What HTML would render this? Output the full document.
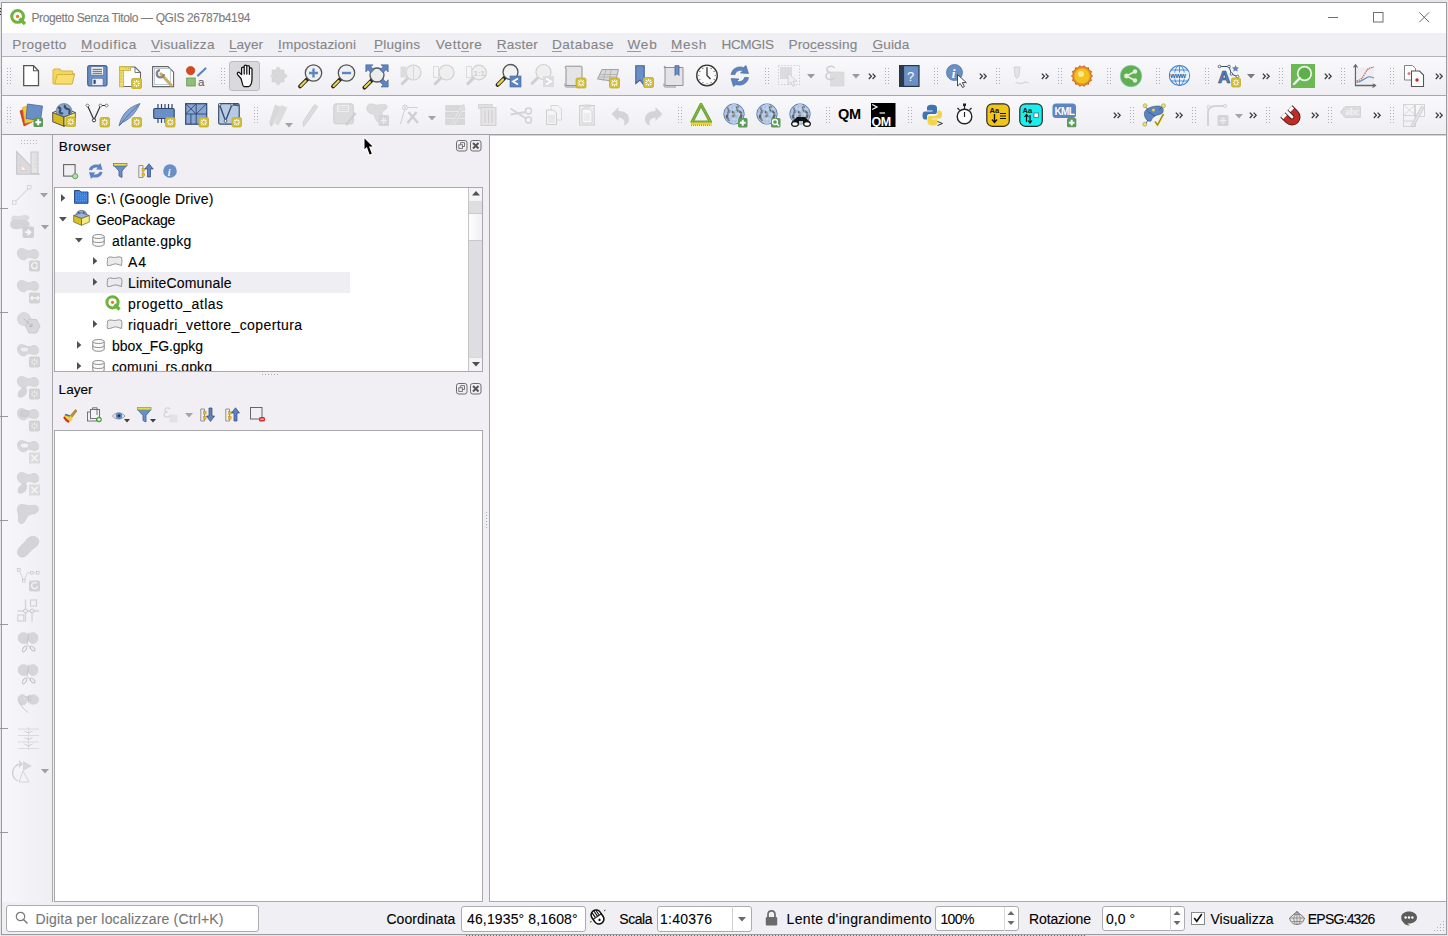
<!DOCTYPE html><html><head><meta charset="utf-8"><style>
html,body{margin:0;padding:0;}
body{width:1448px;height:936px;overflow:hidden;position:relative;background:#e9e9ec;font-family:"Liberation Sans",sans-serif;}
.t{position:absolute;white-space:nowrap;line-height:normal;font-family:"Liberation Sans",sans-serif;-webkit-text-stroke:0.1px currentColor;}
svg{overflow:visible}
</style></head><body>
<div style="position:absolute;left:0px;top:0px;width:1448px;height:936px;background:#e6e6e9"></div>
<svg style="position:absolute;left:0px;top:8px;" width="2" height="7" viewBox="0 0 2 7"><path d="M0 0.5H1.5M0 3.5H1.5M0 6.5H1.5" stroke="#333" stroke-width="1"/><path d="M1.3 0.5V6.5" stroke="#444" stroke-width="0.8"/></svg>
<div style="position:absolute;left:1px;top:2px;width:1446px;height:933px;background:#f0eff3;box-sizing:border-box;border:1px solid #9c9ca0"></div>
<div style="position:absolute;left:2px;top:3px;width:1444px;height:30px;background:#fff"></div>
<svg style="position:absolute;left:10px;top:9px;" width="17" height="16" viewBox="0 0 17 16"><circle cx="7.6" cy="7.4" r="5.9" fill="none" stroke="#6cb33f" stroke-width="3"/><path d="M9.5 9.5L15 15" stroke="#6cb33f" stroke-width="3.2"/><circle cx="7.6" cy="7.4" r="1.7" fill="#ee7913"/></svg>
<div class="t" style="left:31.4px;top:11.14px;font-size:12.0px;color:#7c7c7c;letter-spacing:-0.382px;">Progetto Senza Titolo — QGIS 26787b4194</div>
<svg style="position:absolute;left:1328px;top:17px;" width="11" height="1" viewBox="0 0 11 1"><rect x="0" y="0" width="10" height="1" fill="#6e6e6e"/></svg>
<svg style="position:absolute;left:1373px;top:12px;" width="11" height="11" viewBox="0 0 11 11"><rect x="0.5" y="0.5" width="9.5" height="9.5" fill="none" stroke="#6e6e6e" stroke-width="1"/></svg>
<svg style="position:absolute;left:1419px;top:12px;" width="11" height="11" viewBox="0 0 11 11"><path d="M0.3 0.3L10.2 10.2M10.2 0.3L0.3 10.2" stroke="#6e6e6e" stroke-width="1"/></svg>
<div style="position:absolute;left:2px;top:33px;width:1444px;height:23px;background:#f0eff4"></div>
<div style="position:absolute;left:2px;top:56px;width:1444px;height:1px;background:#b4b4b8"></div>
<div class="t" style="left:12.2px;top:37.39px;font-size:13.6px;color:#858585;letter-spacing:0.398px;">Progetto</div>
<div style="position:absolute;left:21.8px;top:51px;width:4.8px;height:1px;background:#9a9a9a"></div>
<div class="t" style="left:81.0px;top:37.39px;font-size:13.6px;color:#858585;letter-spacing:0.679px;">Modifica</div>
<div style="position:absolute;left:81.0px;top:51px;width:12.4px;height:1px;background:#9a9a9a"></div>
<div class="t" style="left:151.0px;top:37.39px;font-size:13.6px;color:#858585;letter-spacing:0.280px;">Visualizza</div>
<div style="position:absolute;left:151.0px;top:51px;width:9.4px;height:1px;background:#9a9a9a"></div>
<div class="t" style="left:229.0px;top:37.39px;font-size:13.6px;color:#858585;letter-spacing:-0.005px;">Layer</div>
<div style="position:absolute;left:229.0px;top:51px;width:7.6px;height:1px;background:#9a9a9a"></div>
<div class="t" style="left:278.0px;top:37.39px;font-size:13.6px;color:#858585;letter-spacing:0.150px;">Impostazioni</div>
<div style="position:absolute;left:278.0px;top:51px;width:3.9px;height:1px;background:#9a9a9a"></div>
<div class="t" style="left:374.0px;top:37.39px;font-size:13.6px;color:#858585;letter-spacing:0.232px;">Plugins</div>
<div style="position:absolute;left:374.0px;top:51px;width:9.4px;height:1px;background:#9a9a9a"></div>
<div class="t" style="left:435.8px;top:37.39px;font-size:13.6px;color:#858585;letter-spacing:0.483px;">Vettore</div>
<div style="position:absolute;left:460.8px;top:51px;width:8.1px;height:1px;background:#9a9a9a"></div>
<div class="t" style="left:496.7px;top:37.39px;font-size:13.6px;color:#858585;letter-spacing:0.188px;">Raster</div>
<div style="position:absolute;left:496.7px;top:51px;width:10.1px;height:1px;background:#9a9a9a"></div>
<div class="t" style="left:552.0px;top:37.39px;font-size:13.6px;color:#858585;letter-spacing:0.497px;">Database</div>
<div style="position:absolute;left:552.0px;top:51px;width:10.4px;height:1px;background:#9a9a9a"></div>
<div class="t" style="left:627.4px;top:37.39px;font-size:13.6px;color:#858585;letter-spacing:0.840px;">Web</div>
<div style="position:absolute;left:627.4px;top:51px;width:13.6px;height:1px;background:#9a9a9a"></div>
<div class="t" style="left:671.0px;top:37.39px;font-size:13.6px;color:#858585;letter-spacing:0.714px;">Mesh</div>
<div style="position:absolute;left:671.0px;top:51px;width:12.1px;height:1px;background:#9a9a9a"></div>
<div class="t" style="left:721.5px;top:37.39px;font-size:13.6px;color:#858585;letter-spacing:-0.380px;">HCMGIS</div>
<div class="t" style="left:788.4px;top:37.39px;font-size:13.6px;color:#858585;letter-spacing:0.191px;">Processing</div>
<div style="position:absolute;left:810.1px;top:51px;width:7.0px;height:1px;background:#9a9a9a"></div>
<div class="t" style="left:872.4px;top:37.39px;font-size:13.6px;color:#858585;letter-spacing:0.177px;">Guida</div>
<div style="position:absolute;left:872.4px;top:51px;width:10.8px;height:1px;background:#9a9a9a"></div>
<div style="position:absolute;left:2px;top:57px;width:1444px;height:38px;background:linear-gradient(#f9f8fb,#efeef2)"></div>
<div style="position:absolute;left:2px;top:95px;width:1444px;height:1px;background:#a8a8ac"></div>
<div style="position:absolute;left:2px;top:96px;width:1444px;height:38px;background:linear-gradient(#f9f8fb,#efeef2)"></div>
<div style="position:absolute;left:2px;top:134px;width:1444px;height:1px;background:#a0a0a4"></div>
<svg style="position:absolute;left:7px;top:68px;" width="4" height="17" viewBox="0 0 4 17"><rect x="0" y="0" width="1" height="1" fill="#b0b0b4"/><rect x="0" y="3" width="1" height="1" fill="#b0b0b4"/><rect x="0" y="6" width="1" height="1" fill="#b0b0b4"/><rect x="0" y="9" width="1" height="1" fill="#b0b0b4"/><rect x="0" y="12" width="1" height="1" fill="#b0b0b4"/><rect x="0" y="15" width="1" height="1" fill="#b0b0b4"/><rect x="3" y="0" width="1" height="1" fill="#b0b0b4"/><rect x="3" y="3" width="1" height="1" fill="#b0b0b4"/><rect x="3" y="6" width="1" height="1" fill="#b0b0b4"/><rect x="3" y="9" width="1" height="1" fill="#b0b0b4"/><rect x="3" y="12" width="1" height="1" fill="#b0b0b4"/><rect x="3" y="15" width="1" height="1" fill="#b0b0b4"/></svg>
<svg style="position:absolute;left:23px;top:65px;" width="17" height="22" viewBox="0 0 17 22"><path d="M0.7 0.7H10.5L15.5 5.7V20.7H0.7Z" fill="#fff" stroke="#555" stroke-width="1.3"/><path d="M10.5 0.7V5.7H15.5" fill="none" stroke="#555" stroke-width="1.1"/></svg>
<svg style="position:absolute;left:52px;top:67px;" width="23" height="19" viewBox="0 0 23 19"><path d="M1 3.2V16.8H20L22.5 6.5H20.5V4H9.5L8 2H2Z" fill="#f4d65c" stroke="#d4b43e" stroke-width="1"/><path d="M2.8 17L5.2 7.5H22.5L20.2 17Z" fill="#f7dd6b" stroke="#d4b43e" stroke-width="1"/></svg>
<svg style="position:absolute;left:87px;top:65px;" width="21" height="22" viewBox="0 0 21 22"><rect x="0.7" y="0.7" width="19.3" height="20.3" rx="2.2" fill="#6a8fc6" stroke="#46648f" stroke-width="1.2"/><rect x="4" y="1.8" width="12.5" height="8.2" fill="#f6f6f6" stroke="#46648f" stroke-width="0.5"/><path d="M5.5 4.3H15M5.5 6.3H15M5.5 8.3H15" stroke="#3a3a3a" stroke-width="0.8"/><rect x="5" y="13.3" width="11" height="7" fill="#eef2f8" stroke="#46648f" stroke-width="0.5"/><rect x="6.5" y="14.8" width="2.2" height="4" fill="#2f4670"/></svg>
<svg style="position:absolute;left:119px;top:66px;" width="23" height="23" viewBox="0 0 23 23"><path d="M3 1H16L21.5 6.5V20.5H3Z" fill="#fff" stroke="#666" stroke-width="1.1"/><path d="M16 1V6.5H21.5" fill="none" stroke="#666" stroke-width="0.9"/><rect x="0.6" y="0.8" width="4" height="20" fill="#f1dd6b" stroke="#cdb23c" stroke-width="0.9"/><rect x="0.6" y="0.8" width="11" height="3.6" fill="#f1dd6b" stroke="#cdb23c" stroke-width="0.9"/><path d="M1.5 7H3M1.5 10H3M1.5 13H3M1.5 16H3M7 1.5V3M9.5 1.5V3" stroke="#b89a30" stroke-width="0.6"/><rect x="12.5" y="12.5" width="10" height="10" rx="1.5" fill="#d0bd38" stroke="#c2ad2a" stroke-width="0.8"/><g stroke="#fff" stroke-width="1.1"><path d="M17.5 14.0V21.0 M14.0 17.5H21.0 M14.8 14.8L20.2 20.2 M20.2 14.8L14.8 20.2"/></g><circle cx="17.5" cy="17.5" r="1.5" fill="#d0bd38"/></svg>
<svg style="position:absolute;left:152px;top:66px;" width="23" height="23" viewBox="0 0 23 23"><path d="M0.6 0.6H16L21.6 6.2V20.6H0.6Z" fill="#fff" stroke="#666" stroke-width="1.1"/><rect x="2.3" y="2.5" width="16" height="16" fill="none" stroke="#9cb0d0" stroke-width="0.7"/><path d="M9 8L19 19" stroke="#c8b06a" stroke-width="3.2" stroke-linecap="round"/><path d="M8 4.2A3.6 3.6 0 1 0 12 8.2" fill="none" stroke="#888" stroke-width="2.3"/></svg>
<svg style="position:absolute;left:186px;top:66px;" width="21" height="21" viewBox="0 0 21 21"><circle cx="4.6" cy="4.6" r="4.2" fill="#d9481a" stroke="#b03410" stroke-width="0.6"/><path d="M12 9.5L19.5 2.5" stroke="#5b84c4" stroke-width="2.2" stroke-linecap="round"/><rect x="0.7" y="12" width="8.5" height="8" fill="#8fbf78" stroke="#5f9a48" stroke-width="0.8"/><text x="12" y="20" font-family="Liberation Sans" font-size="11.5" fill="#555">a</text></svg>
<svg style="position:absolute;left:221px;top:68px;" width="4" height="17" viewBox="0 0 4 17"><rect x="0" y="0" width="1" height="1" fill="#b0b0b4"/><rect x="0" y="3" width="1" height="1" fill="#b0b0b4"/><rect x="0" y="6" width="1" height="1" fill="#b0b0b4"/><rect x="0" y="9" width="1" height="1" fill="#b0b0b4"/><rect x="0" y="12" width="1" height="1" fill="#b0b0b4"/><rect x="0" y="15" width="1" height="1" fill="#b0b0b4"/><rect x="3" y="0" width="1" height="1" fill="#b0b0b4"/><rect x="3" y="3" width="1" height="1" fill="#b0b0b4"/><rect x="3" y="6" width="1" height="1" fill="#b0b0b4"/><rect x="3" y="9" width="1" height="1" fill="#b0b0b4"/><rect x="3" y="12" width="1" height="1" fill="#b0b0b4"/><rect x="3" y="15" width="1" height="1" fill="#b0b0b4"/></svg>
<div style="position:absolute;left:229px;top:61px;width:31px;height:30px;background:#dadade;border:1px solid #bdbdc0;border-radius:3px;box-sizing:border-box"></div>
<svg style="position:absolute;left:235.5px;top:63.5px;" width="18" height="24" viewBox="0 0 18 24"><path d="M5 14.5L1.6 10.6C0.6 9.4 1.9 7.6 3.4 8.6L5.6 10.5V4.2C5.6 2.6 8.2 2.6 8.2 4.2V10V2.2C8.2 0.6 10.8 0.6 10.8 2.2V10V2.8C10.8 1.2 13.4 1.2 13.4 2.8V10.3V5C13.4 3.4 16 3.4 16 5V15C16 19.5 14.2 22.5 12.5 22.5H8C6.5 22.5 6.2 18 5 14.5Z" fill="#fff" stroke="#111" stroke-width="1.25" stroke-linejoin="round"/></svg>
<svg style="position:absolute;left:267px;top:65px;" width="22" height="22" viewBox="0 0 22 22"><path d="M11 0L14.5 3.5H12.5V6.5H15.5V4.5L19 8L15.5 11.5V9.5H12.5V12.5H14.5L11 16L7.5 12.5H9.5V9.5H6.5V11.5L3 8L6.5 4.5V6.5H9.5V3.5H7.5Z" fill="#dadadc" transform="translate(0,3)"/><path d="M5 4H9C9 2 10 1 11 1S13 2 13 4H17V8C19 8 20 9 20 10S19 12 17 12V16H13C13 18 12 19 11 19S9 18 9 16H5V12C7 12 8 11 8 10S7 8 5 8Z" fill="#d8d8da" stroke="#d0d0d2" stroke-width="0.6" transform="translate(0,1)"/></svg>
<svg style="position:absolute;left:299px;top:64px;" width="24" height="24" viewBox="0 0 24 24"><path d="M8.596 14.904L1.096 22.404" stroke="#222" stroke-width="4" stroke-linecap="round"/><path d="M6.596 16.904L1.596 21.904" stroke="#e8d44d" stroke-width="2.2" stroke-linecap="round"/><circle cx="14.5" cy="9" r="8.2" fill="#f0f0f0" stroke="#555" stroke-width="1.3"/><path d="M14.5 4.5V13.5M10 9H19" stroke="#5b84c4" stroke-width="2.4"/></svg>
<svg style="position:absolute;left:332px;top:64px;" width="24" height="24" viewBox="0 0 24 24"><path d="M8.596 14.904L1.096 22.404" stroke="#222" stroke-width="4" stroke-linecap="round"/><path d="M6.596 16.904L1.596 21.904" stroke="#e8d44d" stroke-width="2.2" stroke-linecap="round"/><circle cx="14.5" cy="9" r="8.2" fill="#f0f0f0" stroke="#555" stroke-width="1.3"/><path d="M10 9H19" stroke="#5b84c4" stroke-width="2.4"/></svg>
<svg style="position:absolute;left:365px;top:64px;" width="24" height="24" viewBox="0 0 24 24"><path d="M6.96 16.04L-0.54 23.54" stroke="#222" stroke-width="4" stroke-linecap="round"/><path d="M4.96 18.04L-0.040000000000000036 23.04" stroke="#e8d44d" stroke-width="2.2" stroke-linecap="round"/><circle cx="12" cy="11" r="7" fill="#ececec" stroke="#555" stroke-width="1.3"/><path d="M0.8 0.8H8L6 2.8L9 5.8L6 8.8L3 5.8L0.8 8Z" fill="#5b84c4" stroke="#46648f" stroke-width="0.6"/><path d="M23.2 0.8H16L18 2.8L15 5.8L18 8.8L21 5.8L23.2 8Z" fill="#5b84c4" stroke="#46648f" stroke-width="0.6"/><path d="M23.2 23H16L18 21L15 18L18 15L21 18L23.2 15.8Z" fill="#5b84c4" stroke="#46648f" stroke-width="0.6"/></svg>
<svg style="position:absolute;left:398px;top:64px;" width="24" height="24" viewBox="0 0 24 24"><path d="M10.25 13.75L4.25 19.75" stroke="#cfcfd1" stroke-width="3" stroke-linecap="round"/><circle cx="15.5" cy="8.5" r="7.5" fill="#efeff0" stroke="#d0d0d2" stroke-width="1.2"/><rect x="2.5" y="2.5" width="6" height="11" fill="#dcdcde"/><path d="M15.5 2V15" stroke="#d6d6d8" stroke-width="1"/></svg>
<svg style="position:absolute;left:431px;top:64px;" width="24" height="24" viewBox="0 0 24 24"><path d="M10.25 13.75L4.25 19.75" stroke="#cfcfd1" stroke-width="3" stroke-linecap="round"/><circle cx="15.5" cy="8.5" r="7.5" fill="#efeff0" stroke="#d0d0d2" stroke-width="1.2"/><rect x="2.5" y="2.5" width="5" height="11" fill="none" stroke="#dcdcde"/></svg>
<svg style="position:absolute;left:464px;top:64px;" width="24" height="24" viewBox="0 0 24 24"><path d="M9.89 13.61L3.8900000000000006 19.61" stroke="#cfcfd1" stroke-width="3" stroke-linecap="round"/><circle cx="15" cy="8.5" r="7.3" fill="#efeff0" stroke="#d0d0d2" stroke-width="1.2"/><rect x="2.5" y="2.5" width="5" height="11" fill="none" stroke="#dcdcde"/><text x="9.5" y="12" font-family="Liberation Sans" font-weight="bold" font-size="8" fill="#cfcfd1">1:1</text></svg>
<svg style="position:absolute;left:497px;top:64px;" width="24" height="24" viewBox="0 0 24 24"><path d="M8.100000000000001 13.399999999999999L0.6000000000000014 20.9" stroke="#222" stroke-width="4" stroke-linecap="round"/><path d="M6.100000000000001 15.399999999999999L1.1000000000000014 20.4" stroke="#e8d44d" stroke-width="2.2" stroke-linecap="round"/><circle cx="13.5" cy="8" r="7.5" fill="#f2f2f2" stroke="#555" stroke-width="1.3"/><rect x="13" y="12" width="11" height="11" fill="#5b84c4" stroke="#46648f" stroke-width="0.6"/><path d="M21 14.5L16 17.5L21 20.5" fill="none" stroke="#fff" stroke-width="1.8"/></svg>
<svg style="position:absolute;left:530px;top:64px;" width="24" height="24" viewBox="0 0 24 24"><path d="M8.25 13.25L2.25 19.25" stroke="#cfcfd1" stroke-width="3" stroke-linecap="round"/><circle cx="13.5" cy="8" r="7.5" fill="#efeff0" stroke="#d0d0d2" stroke-width="1.2"/><rect x="13" y="12" width="11" height="11" fill="#dcdcde"/><path d="M16 14.5L21 17.5L16 20.5" fill="none" stroke="#fff" stroke-width="1.8"/></svg>
<svg style="position:absolute;left:564px;top:65px;" width="23" height="23" viewBox="0 0 23 23"><path d="M2 1.2C0.8 1.2 0.8 3 2 3V20.5H18V2C18 1.5 17.8 1.2 17 1.2Z" fill="#e4e4e6" stroke="#888" stroke-width="0.9"/><path d="M1 18.5V21C1 22 2 22 3 22H13" fill="none" stroke="#888" stroke-width="0.9"/><rect x="12" y="13" width="10" height="10" rx="1.5" fill="#d0bd38" stroke="#c2ad2a" stroke-width="0.8"/><g stroke="#fff" stroke-width="1.1"><path d="M17.0 14.5V21.5 M13.5 18.0H20.5 M14.3 15.3L19.7 20.7 M19.7 15.3L14.3 20.7"/></g><circle cx="17.0" cy="18.0" r="1.5" fill="#d0bd38"/></svg>
<svg style="position:absolute;left:597px;top:66px;" width="23" height="23" viewBox="0 0 23 23"><path d="M0.5 13L5 3.5H21.5L18.5 15.5Z" fill="#d8d8da" stroke="#999" stroke-width="0.9"/><path d="M3 8.5H20M2 11H19.5M9 3.5L6 15M14 3.5L12 15.5" stroke="#aaa" stroke-width="0.7"/><rect x="12.5" y="12" width="10" height="10" rx="1.5" fill="#d0bd38" stroke="#c2ad2a" stroke-width="0.8"/><g stroke="#fff" stroke-width="1.1"><path d="M17.5 13.5V20.5 M14.0 17.0H21.0 M14.8 14.3L20.2 19.7 M20.2 14.3L14.8 19.7"/></g><circle cx="17.5" cy="17.0" r="1.5" fill="#d0bd38"/></svg>
<svg style="position:absolute;left:635px;top:65px;" width="19" height="23" viewBox="0 0 19 23"><path d="M0.8 0.7H9.2V20.5L5 15L0.8 18.5Z" fill="#6a8fc6" stroke="#3e5f92" stroke-width="1.1"/><rect x="8.5" y="12.5" width="10" height="10" rx="1.5" fill="#d0bd38" stroke="#c2ad2a" stroke-width="0.8"/><g stroke="#fff" stroke-width="1.1"><path d="M13.5 14.0V21.0 M10.0 17.5H17.0 M10.8 14.8L16.2 20.2 M16.2 14.8L10.8 20.2"/></g><circle cx="13.5" cy="17.5" r="1.5" fill="#d0bd38"/></svg>
<svg style="position:absolute;left:663px;top:65px;" width="21" height="23" viewBox="0 0 21 23"><path d="M2 1.2C0.8 1.2 0.8 3 2 3V20.5H20V2.5H2Z" fill="#e4e4e6" stroke="#888" stroke-width="0.9"/><path d="M1 18.5V21C1 22 2 22 3 22H13" fill="none" stroke="#888" stroke-width="0.9"/><path d="M12 0.7H16V10.5L14 8.5L12 10.5Z" fill="#6a8fc6" stroke="#3e5f92" stroke-width="0.8"/></svg>
<svg style="position:absolute;left:696px;top:64px;" width="22" height="23" viewBox="0 0 22 23"><circle cx="11" cy="11.5" r="10.3" fill="#fafafa" stroke="#333" stroke-width="1.3"/><path d="M11 3.5V11.5L14.5 15" fill="none" stroke="#333" stroke-width="1.3"/><circle cx="19.20" cy="11.50" r="0.55" fill="#444"/><circle cx="18.10" cy="15.60" r="0.55" fill="#444"/><circle cx="15.10" cy="18.60" r="0.55" fill="#444"/><circle cx="11.00" cy="19.70" r="0.55" fill="#444"/><circle cx="6.90" cy="18.60" r="0.55" fill="#444"/><circle cx="3.90" cy="15.60" r="0.55" fill="#444"/><circle cx="2.80" cy="11.50" r="0.55" fill="#444"/><circle cx="3.90" cy="7.40" r="0.55" fill="#444"/><circle cx="6.90" cy="4.40" r="0.55" fill="#444"/><circle cx="11.00" cy="3.30" r="0.55" fill="#444"/><circle cx="15.10" cy="4.40" r="0.55" fill="#444"/><circle cx="18.10" cy="7.40" r="0.55" fill="#444"/></svg>
<svg style="position:absolute;left:729px;top:65px;" width="21" height="22" viewBox="0 0 21 22"><path d="M2 9.5C3 3.5 9 0.5 14.5 2.5L17 0.5L19.5 8.5L11.5 8L13.8 5.7C10 4.6 7 6.2 6 9.5Z" fill="#5b84c4" stroke="#46648f" stroke-width="0.6"/><path d="M19.5 12.5C18.5 18.5 12.5 21.5 7 19.5L4.5 21.5L2 13.5L10 14L7.7 16.3C11.5 17.4 14.5 15.8 15.5 12.5Z" fill="#5b84c4" stroke="#46648f" stroke-width="0.6"/></svg>
<svg style="position:absolute;left:765px;top:68px;" width="4" height="17" viewBox="0 0 4 17"><rect x="0" y="0" width="1" height="1" fill="#b0b0b4"/><rect x="0" y="3" width="1" height="1" fill="#b0b0b4"/><rect x="0" y="6" width="1" height="1" fill="#b0b0b4"/><rect x="0" y="9" width="1" height="1" fill="#b0b0b4"/><rect x="0" y="12" width="1" height="1" fill="#b0b0b4"/><rect x="0" y="15" width="1" height="1" fill="#b0b0b4"/><rect x="3" y="0" width="1" height="1" fill="#b0b0b4"/><rect x="3" y="3" width="1" height="1" fill="#b0b0b4"/><rect x="3" y="6" width="1" height="1" fill="#b0b0b4"/><rect x="3" y="9" width="1" height="1" fill="#b0b0b4"/><rect x="3" y="12" width="1" height="1" fill="#b0b0b4"/><rect x="3" y="15" width="1" height="1" fill="#b0b0b4"/></svg>
<svg style="position:absolute;left:778px;top:65px;" width="22" height="22" viewBox="0 0 22 22"><rect x="0.5" y="0.5" width="21" height="19" fill="none" stroke="#cfcfd1" stroke-dasharray="1.5 1.5"/><rect x="2" y="2" width="12" height="12" fill="#dcdcde"/><path d="M10 8V19.5L12.8 17L15 21.5L17 20.5L15 16.3H19Z" fill="#efeff1" stroke="#cfcfd1" stroke-width="0.9"/></svg>
<svg style="position:absolute;left:807px;top:74px;" width="8" height="5" viewBox="0 0 8 5"><path d="M0 0H8L4 4.5Z" fill="#9a9a9c"/></svg>
<svg style="position:absolute;left:825px;top:65px;" width="20" height="22" viewBox="0 0 20 22"><rect x="5.5" y="7" width="13.5" height="14" fill="#dcdcde" stroke="#d4d4d6" stroke-width="0.6"/><path d="M9.5 3C8.5 1.5 6.5 1 4.5 1.5S1.5 3.5 2 5S4 7.5 6 7.5C3.5 7.5 1 8.5 1 11S3 14.5 5.5 14.5S9 13.5 10 12.5" fill="none" stroke="#cfcfd1" stroke-width="1.6"/></svg>
<svg style="position:absolute;left:852px;top:74px;" width="8" height="5" viewBox="0 0 8 5"><path d="M0 0H8L4 4.5Z" fill="#9a9a9c"/></svg>
<svg style="position:absolute;left:868px;top:73px;" width="8" height="7" viewBox="0 0 8 7"><path d="M0.8 0.6L3.4 3.3L0.8 6M4.6 0.6L7.2 3.3L4.6 6" fill="none" stroke="#3a3a3a" stroke-width="1.25"/></svg>
<svg style="position:absolute;left:885px;top:68px;" width="4" height="17" viewBox="0 0 4 17"><rect x="0" y="0" width="1" height="1" fill="#b0b0b4"/><rect x="0" y="3" width="1" height="1" fill="#b0b0b4"/><rect x="0" y="6" width="1" height="1" fill="#b0b0b4"/><rect x="0" y="9" width="1" height="1" fill="#b0b0b4"/><rect x="0" y="12" width="1" height="1" fill="#b0b0b4"/><rect x="0" y="15" width="1" height="1" fill="#b0b0b4"/><rect x="3" y="0" width="1" height="1" fill="#b0b0b4"/><rect x="3" y="3" width="1" height="1" fill="#b0b0b4"/><rect x="3" y="6" width="1" height="1" fill="#b0b0b4"/><rect x="3" y="9" width="1" height="1" fill="#b0b0b4"/><rect x="3" y="12" width="1" height="1" fill="#b0b0b4"/><rect x="3" y="15" width="1" height="1" fill="#b0b0b4"/></svg>
<svg style="position:absolute;left:899px;top:65px;" width="21" height="22" viewBox="0 0 21 22"><rect x="0.6" y="0.6" width="19.4" height="20.8" fill="#6a8fc6" stroke="#2a3442" stroke-width="1.2"/><rect x="0.6" y="0.6" width="4.5" height="20.8" fill="#2b3a4e"/><text x="8" y="15.5" font-family="Liberation Sans" font-size="13" fill="#fff">?</text></svg>
<svg style="position:absolute;left:934px;top:68px;" width="4" height="17" viewBox="0 0 4 17"><rect x="0" y="0" width="1" height="1" fill="#b0b0b4"/><rect x="0" y="3" width="1" height="1" fill="#b0b0b4"/><rect x="0" y="6" width="1" height="1" fill="#b0b0b4"/><rect x="0" y="9" width="1" height="1" fill="#b0b0b4"/><rect x="0" y="12" width="1" height="1" fill="#b0b0b4"/><rect x="0" y="15" width="1" height="1" fill="#b0b0b4"/><rect x="3" y="0" width="1" height="1" fill="#b0b0b4"/><rect x="3" y="3" width="1" height="1" fill="#b0b0b4"/><rect x="3" y="6" width="1" height="1" fill="#b0b0b4"/><rect x="3" y="9" width="1" height="1" fill="#b0b0b4"/><rect x="3" y="12" width="1" height="1" fill="#b0b0b4"/><rect x="3" y="15" width="1" height="1" fill="#b0b0b4"/></svg>
<svg style="position:absolute;left:946px;top:64px;" width="24" height="24" viewBox="0 0 24 24"><circle cx="8.5" cy="8.5" r="8" fill="#6a8fc6" stroke="#4f72a8" stroke-width="0.8"/><text x="5.8" y="14" font-family="Liberation Serif" font-style="italic" font-weight="bold" font-size="13" fill="#fff">i</text><path d="M11.5 10.5V22L14.2 19.5L16.5 23.5L18.4 22.5L16.3 18.6H20.3Z" fill="#fff" stroke="#333" stroke-width="0.9"/></svg>
<svg style="position:absolute;left:979px;top:73px;" width="8" height="7" viewBox="0 0 8 7"><path d="M0.8 0.6L3.4 3.3L0.8 6M4.6 0.6L7.2 3.3L4.6 6" fill="none" stroke="#3a3a3a" stroke-width="1.25"/></svg>
<svg style="position:absolute;left:996px;top:68px;" width="4" height="17" viewBox="0 0 4 17"><rect x="0" y="0" width="1" height="1" fill="#b0b0b4"/><rect x="0" y="3" width="1" height="1" fill="#b0b0b4"/><rect x="0" y="6" width="1" height="1" fill="#b0b0b4"/><rect x="0" y="9" width="1" height="1" fill="#b0b0b4"/><rect x="0" y="12" width="1" height="1" fill="#b0b0b4"/><rect x="0" y="15" width="1" height="1" fill="#b0b0b4"/><rect x="3" y="0" width="1" height="1" fill="#b0b0b4"/><rect x="3" y="3" width="1" height="1" fill="#b0b0b4"/><rect x="3" y="6" width="1" height="1" fill="#b0b0b4"/><rect x="3" y="9" width="1" height="1" fill="#b0b0b4"/><rect x="3" y="12" width="1" height="1" fill="#b0b0b4"/><rect x="3" y="15" width="1" height="1" fill="#b0b0b4"/></svg>
<svg style="position:absolute;left:1011px;top:66px;" width="19" height="20" viewBox="0 0 19 20"><path d="M3 1H9L8 10L6 12.5L4 10Z" fill="#e4e4e6" stroke="#cfcfd1" stroke-width="0.9"/><path d="M4.5 17C7 16 9.5 18.5 12 17S16 16 18 17.5" fill="none" stroke="#cfcfd1" stroke-width="1"/></svg>
<svg style="position:absolute;left:1041px;top:73px;" width="8" height="7" viewBox="0 0 8 7"><path d="M0.8 0.6L3.4 3.3L0.8 6M4.6 0.6L7.2 3.3L4.6 6" fill="none" stroke="#3a3a3a" stroke-width="1.25"/></svg>
<svg style="position:absolute;left:1058px;top:68px;" width="4" height="17" viewBox="0 0 4 17"><rect x="0" y="0" width="1" height="1" fill="#b0b0b4"/><rect x="0" y="3" width="1" height="1" fill="#b0b0b4"/><rect x="0" y="6" width="1" height="1" fill="#b0b0b4"/><rect x="0" y="9" width="1" height="1" fill="#b0b0b4"/><rect x="0" y="12" width="1" height="1" fill="#b0b0b4"/><rect x="0" y="15" width="1" height="1" fill="#b0b0b4"/><rect x="3" y="0" width="1" height="1" fill="#b0b0b4"/><rect x="3" y="3" width="1" height="1" fill="#b0b0b4"/><rect x="3" y="6" width="1" height="1" fill="#b0b0b4"/><rect x="3" y="9" width="1" height="1" fill="#b0b0b4"/><rect x="3" y="12" width="1" height="1" fill="#b0b0b4"/><rect x="3" y="15" width="1" height="1" fill="#b0b0b4"/></svg>
<svg style="position:absolute;left:1071px;top:65px;" width="22" height="22" viewBox="0 0 22 22"><polygon points="21.50,11.00 19.58,12.96 20.46,15.56 17.88,16.49 17.55,19.21 14.82,18.93 13.34,21.24 11.00,19.80 8.66,21.24 7.18,18.93 4.45,19.21 4.12,16.49 1.54,15.56 2.42,12.96 0.50,11.00 2.42,9.04 1.54,6.44 4.12,5.51 4.45,2.79 7.18,3.07 8.66,0.76 11.00,2.20 13.34,0.76 14.82,3.07 17.55,2.79 17.88,5.51 20.46,6.44 19.58,9.04" fill="#e89a1c" stroke="#c8501a" stroke-width="0.9"/><circle cx="11" cy="11" r="7.5" fill="#f4c21e"/><circle cx="10" cy="9" r="3" fill="#fbe890"/></svg>
<svg style="position:absolute;left:1107px;top:68px;" width="4" height="17" viewBox="0 0 4 17"><rect x="0" y="0" width="1" height="1" fill="#b0b0b4"/><rect x="0" y="3" width="1" height="1" fill="#b0b0b4"/><rect x="0" y="6" width="1" height="1" fill="#b0b0b4"/><rect x="0" y="9" width="1" height="1" fill="#b0b0b4"/><rect x="0" y="12" width="1" height="1" fill="#b0b0b4"/><rect x="0" y="15" width="1" height="1" fill="#b0b0b4"/><rect x="3" y="0" width="1" height="1" fill="#b0b0b4"/><rect x="3" y="3" width="1" height="1" fill="#b0b0b4"/><rect x="3" y="6" width="1" height="1" fill="#b0b0b4"/><rect x="3" y="9" width="1" height="1" fill="#b0b0b4"/><rect x="3" y="12" width="1" height="1" fill="#b0b0b4"/><rect x="3" y="15" width="1" height="1" fill="#b0b0b4"/></svg>
<svg style="position:absolute;left:1120px;top:65px;" width="22" height="22" viewBox="0 0 22 22"><circle cx="11" cy="11" r="10.8" fill="#62ae52" stroke="#7fdcc8" stroke-width="0.5"/><path d="M6.5 11L15 6.5M6.5 11L15 15.5" stroke="#dff0da" stroke-width="1.6"/><circle cx="6.5" cy="11" r="2.4" fill="#dff0da"/><circle cx="15" cy="6.5" r="2.2" fill="#dff0da"/><circle cx="15" cy="15.5" r="2.2" fill="#dff0da"/></svg>
<svg style="position:absolute;left:1156px;top:68px;" width="4" height="17" viewBox="0 0 4 17"><rect x="0" y="0" width="1" height="1" fill="#b0b0b4"/><rect x="0" y="3" width="1" height="1" fill="#b0b0b4"/><rect x="0" y="6" width="1" height="1" fill="#b0b0b4"/><rect x="0" y="9" width="1" height="1" fill="#b0b0b4"/><rect x="0" y="12" width="1" height="1" fill="#b0b0b4"/><rect x="0" y="15" width="1" height="1" fill="#b0b0b4"/><rect x="3" y="0" width="1" height="1" fill="#b0b0b4"/><rect x="3" y="3" width="1" height="1" fill="#b0b0b4"/><rect x="3" y="6" width="1" height="1" fill="#b0b0b4"/><rect x="3" y="9" width="1" height="1" fill="#b0b0b4"/><rect x="3" y="12" width="1" height="1" fill="#b0b0b4"/><rect x="3" y="15" width="1" height="1" fill="#b0b0b4"/></svg>
<svg style="position:absolute;left:1169px;top:65px;" width="21" height="21" viewBox="0 0 21 21"><circle cx="10.5" cy="10.5" r="10" fill="#eaf1fa" stroke="#3a86d8" stroke-width="1.2"/><path d="M0.5 10.5H20.5M10.5 0.5V20.5M2.5 5H18.5M2.5 16H18.5" stroke="#3a86d8" stroke-width="0.9"/><ellipse cx="10.5" cy="10.5" rx="5" ry="10" fill="none" stroke="#3a86d8" stroke-width="0.9"/><rect x="1" y="7.5" width="19" height="6" fill="#eaf1fa"/><text x="1.3" y="13.2" font-family="Liberation Sans" font-weight="bold" font-size="7" fill="#2b5fa8" letter-spacing="-0.3">www</text></svg>
<svg style="position:absolute;left:1205px;top:68px;" width="4" height="17" viewBox="0 0 4 17"><rect x="0" y="0" width="1" height="1" fill="#b0b0b4"/><rect x="0" y="3" width="1" height="1" fill="#b0b0b4"/><rect x="0" y="6" width="1" height="1" fill="#b0b0b4"/><rect x="0" y="9" width="1" height="1" fill="#b0b0b4"/><rect x="0" y="12" width="1" height="1" fill="#b0b0b4"/><rect x="0" y="15" width="1" height="1" fill="#b0b0b4"/><rect x="3" y="0" width="1" height="1" fill="#b0b0b4"/><rect x="3" y="3" width="1" height="1" fill="#b0b0b4"/><rect x="3" y="6" width="1" height="1" fill="#b0b0b4"/><rect x="3" y="9" width="1" height="1" fill="#b0b0b4"/><rect x="3" y="12" width="1" height="1" fill="#b0b0b4"/><rect x="3" y="15" width="1" height="1" fill="#b0b0b4"/></svg>
<svg style="position:absolute;left:1218px;top:64px;" width="24" height="24" viewBox="0 0 24 24"><path d="M1.5 2.5H11L13.5 10L19 12.5" fill="none" stroke="#3a4d6a" stroke-width="1"/><circle cx="1.5" cy="2.5" r="1.3" fill="#fff" stroke="#3a4d6a" stroke-width="0.8"/><circle cx="11" cy="2.5" r="1.3" fill="#fff" stroke="#3a4d6a" stroke-width="0.8"/><circle cx="13.5" cy="10" r="1.3" fill="#fff" stroke="#3a4d6a" stroke-width="0.8"/><circle cx="19.5" cy="12.5" r="1.3" fill="#fff" stroke="#3a4d6a" stroke-width="0.8"/><path d="M17.5 1L18.6 3.3L21 3.6L19.3 5.2L19.7 7.5L17.5 6.4L15.3 7.5L15.7 5.2L14 3.6L16.4 3.3Z" fill="#5b84c4"/><text x="0" y="19" font-family="Liberation Sans" font-weight="bold" font-size="17" fill="#5b84c4" stroke="#2b4a78" stroke-width="0.7">A</text><rect x="13.5" y="14" width="9" height="9" rx="1.5" fill="#d0bd38" stroke="#c2ad2a" stroke-width="0.8"/><g stroke="#fff" stroke-width="1.1"><path d="M18.0 15.5V21.5 M15.0 18.5H21.0 M15.8 16.3L20.2 20.7 M20.2 16.3L15.8 20.7"/></g><circle cx="18.0" cy="18.5" r="1.5" fill="#d0bd38"/></svg>
<svg style="position:absolute;left:1247px;top:74px;" width="8" height="5" viewBox="0 0 8 5"><path d="M0 0H8L4 4.5Z" fill="#7a7a7a"/></svg>
<svg style="position:absolute;left:1262px;top:73px;" width="8" height="7" viewBox="0 0 8 7"><path d="M0.8 0.6L3.4 3.3L0.8 6M4.6 0.6L7.2 3.3L4.6 6" fill="none" stroke="#3a3a3a" stroke-width="1.25"/></svg>
<svg style="position:absolute;left:1279px;top:68px;" width="4" height="17" viewBox="0 0 4 17"><rect x="0" y="0" width="1" height="1" fill="#b0b0b4"/><rect x="0" y="3" width="1" height="1" fill="#b0b0b4"/><rect x="0" y="6" width="1" height="1" fill="#b0b0b4"/><rect x="0" y="9" width="1" height="1" fill="#b0b0b4"/><rect x="0" y="12" width="1" height="1" fill="#b0b0b4"/><rect x="0" y="15" width="1" height="1" fill="#b0b0b4"/><rect x="3" y="0" width="1" height="1" fill="#b0b0b4"/><rect x="3" y="3" width="1" height="1" fill="#b0b0b4"/><rect x="3" y="6" width="1" height="1" fill="#b0b0b4"/><rect x="3" y="9" width="1" height="1" fill="#b0b0b4"/><rect x="3" y="12" width="1" height="1" fill="#b0b0b4"/><rect x="3" y="15" width="1" height="1" fill="#b0b0b4"/></svg>
<svg style="position:absolute;left:1291px;top:64px;" width="24" height="24" viewBox="0 0 24 24"><rect x="0" y="0" width="24" height="24" fill="#6cb856"/><circle cx="13.5" cy="9.5" r="6.8" fill="#5fae4c" stroke="#eaf5e6" stroke-width="1.8"/><path d="M8.8 14.2L3 20" stroke="#eaf5e6" stroke-width="2.4" stroke-linecap="round"/></svg>
<svg style="position:absolute;left:1324px;top:73px;" width="8" height="7" viewBox="0 0 8 7"><path d="M0.8 0.6L3.4 3.3L0.8 6M4.6 0.6L7.2 3.3L4.6 6" fill="none" stroke="#3a3a3a" stroke-width="1.25"/></svg>
<svg style="position:absolute;left:1341px;top:68px;" width="4" height="17" viewBox="0 0 4 17"><rect x="0" y="0" width="1" height="1" fill="#b0b0b4"/><rect x="0" y="3" width="1" height="1" fill="#b0b0b4"/><rect x="0" y="6" width="1" height="1" fill="#b0b0b4"/><rect x="0" y="9" width="1" height="1" fill="#b0b0b4"/><rect x="0" y="12" width="1" height="1" fill="#b0b0b4"/><rect x="0" y="15" width="1" height="1" fill="#b0b0b4"/><rect x="3" y="0" width="1" height="1" fill="#b0b0b4"/><rect x="3" y="3" width="1" height="1" fill="#b0b0b4"/><rect x="3" y="6" width="1" height="1" fill="#b0b0b4"/><rect x="3" y="9" width="1" height="1" fill="#b0b0b4"/><rect x="3" y="12" width="1" height="1" fill="#b0b0b4"/><rect x="3" y="15" width="1" height="1" fill="#b0b0b4"/></svg>
<svg style="position:absolute;left:1353px;top:64px;" width="24" height="24" viewBox="0 0 24 24"><path d="M2.5 1V21.5H22" fill="none" stroke="#666" stroke-width="1.3"/><path d="M0.5 3.5L2.5 0.8L4.5 3.5M19.5 19.5L22.5 21.5L19.5 23.5" fill="none" stroke="#666" stroke-width="1.2"/><rect x="3.5" y="4" width="17" height="16" fill="#eeeef2"/><path d="M3.5 17C9 16 10 13 12.5 8.5S17 4 21 3" fill="none" stroke="#e0604a" stroke-width="1.3" stroke-dasharray="1.5 0.8"/><path d="M3.5 18.5C9 17.5 12 14 15 13S19 13.5 21 14" fill="none" stroke="#5b84c4" stroke-width="1.1"/></svg>
<svg style="position:absolute;left:1390px;top:68px;" width="4" height="17" viewBox="0 0 4 17"><rect x="0" y="0" width="1" height="1" fill="#b0b0b4"/><rect x="0" y="3" width="1" height="1" fill="#b0b0b4"/><rect x="0" y="6" width="1" height="1" fill="#b0b0b4"/><rect x="0" y="9" width="1" height="1" fill="#b0b0b4"/><rect x="0" y="12" width="1" height="1" fill="#b0b0b4"/><rect x="0" y="15" width="1" height="1" fill="#b0b0b4"/><rect x="3" y="0" width="1" height="1" fill="#b0b0b4"/><rect x="3" y="3" width="1" height="1" fill="#b0b0b4"/><rect x="3" y="6" width="1" height="1" fill="#b0b0b4"/><rect x="3" y="9" width="1" height="1" fill="#b0b0b4"/><rect x="3" y="12" width="1" height="1" fill="#b0b0b4"/><rect x="3" y="15" width="1" height="1" fill="#b0b0b4"/></svg>
<svg style="position:absolute;left:1404px;top:65px;" width="21" height="23" viewBox="0 0 21 23"><path d="M0.5 0.5H8.5L11.5 3.5V15H0.5Z" fill="#fff" stroke="#777" stroke-width="0.9"/><circle cx="5" cy="8.5" r="1.5" fill="#e08070"/><path d="M7.5 6H15.5L19.5 10V21.5H7.5Z" fill="#fff" stroke="#555" stroke-width="1.1"/><circle cx="13" cy="15" r="1.7" fill="#c8281a"/></svg>
<svg style="position:absolute;left:1435px;top:73px;" width="8" height="7" viewBox="0 0 8 7"><path d="M0.8 0.6L3.4 3.3L0.8 6M4.6 0.6L7.2 3.3L4.6 6" fill="none" stroke="#3a3a3a" stroke-width="1.25"/></svg>
<svg style="position:absolute;left:7px;top:107px;" width="4" height="17" viewBox="0 0 4 17"><rect x="0" y="0" width="1" height="1" fill="#b0b0b4"/><rect x="0" y="3" width="1" height="1" fill="#b0b0b4"/><rect x="0" y="6" width="1" height="1" fill="#b0b0b4"/><rect x="0" y="9" width="1" height="1" fill="#b0b0b4"/><rect x="0" y="12" width="1" height="1" fill="#b0b0b4"/><rect x="0" y="15" width="1" height="1" fill="#b0b0b4"/><rect x="3" y="0" width="1" height="1" fill="#b0b0b4"/><rect x="3" y="3" width="1" height="1" fill="#b0b0b4"/><rect x="3" y="6" width="1" height="1" fill="#b0b0b4"/><rect x="3" y="9" width="1" height="1" fill="#b0b0b4"/><rect x="3" y="12" width="1" height="1" fill="#b0b0b4"/><rect x="3" y="15" width="1" height="1" fill="#b0b0b4"/></svg>
<svg style="position:absolute;left:19px;top:103px;" width="24" height="24" viewBox="0 0 24 24"><path d="M1 8L9 4L13 19L5 23Z" fill="#d8402a" stroke="#b03018" stroke-width="0.6"/><path d="M3.5 4.5L12 1.5L14.5 18.5L6 20.5Z" fill="#f0c93c" stroke="#d0a420" stroke-width="0.6"/><path d="M8.5 1L23.5 3L21.5 17.5L7 15.5Z" fill="#6a8fc6" stroke="#3e5f92" stroke-width="0.7"/><rect x="14.5" y="14.5" width="9.5" height="9.5" rx="1.5" fill="#5b9a5b"/><path d="M19.25 16.3V22.2 M16.3 19.25H22.2" stroke="#fff" stroke-width="2"/></svg>
<svg style="position:absolute;left:52px;top:103px;" width="24" height="24" viewBox="0 0 24 24"><circle cx="12" cy="8.5" r="8" fill="#8aa6d0" stroke="#555" stroke-width="0.5"/><path d="M6 5C8 4 9 6 8 8S9 11 11 10M13 2C12 4 14 6 16 6S18 9 17 11" fill="none" stroke="#34506e" stroke-width="2.2"/><path d="M0.7 9.5L12 13.5L23.3 9.5V19L12 23.3L0.7 19Z" fill="none"/><path d="M0.7 9.5L12 14V23.3L0.7 18.8Z" fill="#d4ba1e" stroke="#333" stroke-width="0.8"/><path d="M12 14L23.3 9.5V18.8L12 23.3Z" fill="#f6ee7a" stroke="#333" stroke-width="0.8"/><path d="M0.7 9.5L4 8.2M23.3 9.5L20 8.2" stroke="#333" stroke-width="0.8"/><rect x="14" y="14" width="9.5" height="9.5" rx="1.5" fill="#d0bd38" stroke="#c2ad2a" stroke-width="0.8"/><g stroke="#fff" stroke-width="1.1"><path d="M18.75 15.5V22.0 M15.5 18.75H22.0 M16.3 16.3L21.2 21.2 M21.2 16.3L16.3 21.2"/></g><circle cx="18.75" cy="18.75" r="1.5" fill="#d0bd38"/></svg>
<svg style="position:absolute;left:85px;top:103px;" width="25" height="24" viewBox="0 0 25 24"><path d="M2.5 2.5L9 17L15.5 2.5H21.5" fill="none" stroke="#333" stroke-width="1.2"/><path d="M2.5 0.8L4.2 2.5L2.5 4.2L0.8 2.5Z" fill="#fff" stroke="#333" stroke-width="0.7"/><path d="M15.5 0.8L17.2 2.5L15.5 4.2L13.8 2.5Z" fill="#fff" stroke="#333" stroke-width="0.7"/><path d="M21.5 0.8L23.2 2.5L21.5 4.2L19.8 2.5Z" fill="#fff" stroke="#333" stroke-width="0.7"/><circle cx="9" cy="17.3" r="1.6" fill="#fff" stroke="#333" stroke-width="1"/><rect x="15" y="14.5" width="9.5" height="9.5" rx="1.5" fill="#d0bd38" stroke="#c2ad2a" stroke-width="0.8"/><g stroke="#fff" stroke-width="1.1"><path d="M19.75 16.0V22.5 M16.5 19.25H23.0 M17.3 16.8L22.2 21.7 M22.2 16.8L17.3 21.7"/></g><circle cx="19.75" cy="19.25" r="1.5" fill="#d0bd38"/></svg>
<svg style="position:absolute;left:118px;top:103px;" width="24" height="24" viewBox="0 0 24 24"><path d="M1 23C3 14 8 5 22 0.5C19 7 14 15 4.5 19.5Z" fill="#88a6d4" stroke="#4f6e9c" stroke-width="0.8"/><path d="M2 22C8 14 14 8 20 2.5" fill="none" stroke="#3e5f92" stroke-width="0.7"/><rect x="14" y="14.5" width="9.5" height="9.5" rx="1.5" fill="#d0bd38" stroke="#c2ad2a" stroke-width="0.8"/><g stroke="#fff" stroke-width="1.1"><path d="M18.75 16.0V22.5 M15.5 19.25H22.0 M16.3 16.8L21.2 21.7 M21.2 16.8L16.3 21.7"/></g><circle cx="18.75" cy="19.25" r="1.5" fill="#d0bd38"/></svg>
<svg style="position:absolute;left:153px;top:103px;" width="22" height="24" viewBox="0 0 22 24"><path d="M5 1V6M8.5 1V6M12 1V6M15.5 1V6M19 1V6M5 15V20M8.5 15V20M12 15V20M15.5 15V20" stroke="#2f4670" stroke-width="1.2"/><rect x="0.7" y="5.5" width="20.5" height="10" rx="1.3" fill="#6a8fc6" stroke="#2f4670" stroke-width="1.1"/><rect x="12.5" y="14.5" width="9.5" height="9.5" rx="1.5" fill="#d0bd38" stroke="#c2ad2a" stroke-width="0.8"/><g stroke="#fff" stroke-width="1.1"><path d="M17.25 16.0V22.5 M14.0 19.25H20.5 M14.8 16.8L19.7 21.7 M19.7 16.8L14.8 21.7"/></g><circle cx="17.25" cy="19.25" r="1.5" fill="#d0bd38"/></svg>
<svg style="position:absolute;left:185px;top:103px;" width="24" height="24" viewBox="0 0 24 24"><rect x="0.7" y="0.7" width="21" height="20.5" fill="#88a6d4" stroke="#2f4670" stroke-width="1.2"/><path d="M11.2 0.7V21.2M0.7 11H21.7M0.7 0.7L11.2 11M11.2 0.7L0.7 11M21.7 0.7L11.2 11M5.9 11V21.2" stroke="#2f4670" stroke-width="0.9"/><rect x="14" y="14.5" width="9.5" height="9.5" rx="1.5" fill="#d0bd38" stroke="#c2ad2a" stroke-width="0.8"/><g stroke="#fff" stroke-width="1.1"><path d="M18.75 16.0V22.5 M15.5 19.25H22.0 M16.3 16.8L21.2 21.7 M21.2 16.8L16.3 21.7"/></g><circle cx="18.75" cy="19.25" r="1.5" fill="#d0bd38"/></svg>
<svg style="position:absolute;left:218px;top:103px;" width="24" height="24" viewBox="0 0 24 24"><rect x="0.7" y="0.7" width="20.5" height="20.5" rx="1.5" fill="#b8cbe6" stroke="#3a4d6a" stroke-width="1.2"/><path d="M1.5 1.5L7.5 18L14 1.5L20.5 2.5" fill="none" stroke="#3a4d6a" stroke-width="1.4"/><circle cx="7.5" cy="18" r="1.4" fill="#fff" stroke="#3a4d6a" stroke-width="0.8"/><circle cx="14" cy="1.8" r="1.2" fill="#fff" stroke="#3a4d6a" stroke-width="0.8"/><circle cx="1.8" cy="1.8" r="1.2" fill="#fff" stroke="#3a4d6a" stroke-width="0.8"/><rect x="14" y="14.5" width="9.5" height="9.5" rx="1.5" fill="#d0bd38" stroke="#c2ad2a" stroke-width="0.8"/><g stroke="#fff" stroke-width="1.1"><path d="M18.75 16.0V22.5 M15.5 19.25H22.0 M16.3 16.8L21.2 21.7 M21.2 16.8L16.3 21.7"/></g><circle cx="18.75" cy="19.25" r="1.5" fill="#d0bd38"/></svg>
<svg style="position:absolute;left:254px;top:107px;" width="4" height="17" viewBox="0 0 4 17"><rect x="0" y="0" width="1" height="1" fill="#b0b0b4"/><rect x="0" y="3" width="1" height="1" fill="#b0b0b4"/><rect x="0" y="6" width="1" height="1" fill="#b0b0b4"/><rect x="0" y="9" width="1" height="1" fill="#b0b0b4"/><rect x="0" y="12" width="1" height="1" fill="#b0b0b4"/><rect x="0" y="15" width="1" height="1" fill="#b0b0b4"/><rect x="3" y="0" width="1" height="1" fill="#b0b0b4"/><rect x="3" y="3" width="1" height="1" fill="#b0b0b4"/><rect x="3" y="6" width="1" height="1" fill="#b0b0b4"/><rect x="3" y="9" width="1" height="1" fill="#b0b0b4"/><rect x="3" y="12" width="1" height="1" fill="#b0b0b4"/><rect x="3" y="15" width="1" height="1" fill="#b0b0b4"/></svg>
<svg style="position:absolute;left:268px;top:104px;" width="20" height="23" viewBox="0 0 20 23"><path d="M7 0.5L13 3L5 21L1 19Z" fill="#d8d8da"/><path d="M13 1L19.5 3.5L10.5 21.5L6.5 19.5Z" fill="#dcdcde"/><path d="M1.5 19L3 22.5L5 21Z" fill="#cacacc"/></svg>
<svg style="position:absolute;left:285px;top:123px;" width="8" height="5" viewBox="0 0 8 5"><path d="M0 0H8L4 4.5Z" fill="#a4a4a6"/></svg>
<svg style="position:absolute;left:302px;top:104px;" width="16" height="23" viewBox="0 0 16 23"><path d="M12.5 0.5L15.8 2.5L4.5 19L1.5 22.5L1.2 17.5Z" fill="#dcdcde" stroke="#cfcfd1" stroke-width="0.8"/></svg>
<svg style="position:absolute;left:333px;top:103px;" width="24" height="24" viewBox="0 0 24 24"><rect x="0.8" y="0.8" width="19.5" height="20" rx="2" fill="#dcdcde" stroke="#cfcfd1" stroke-width="1"/><rect x="4" y="2" width="12" height="7" fill="#eeeef0"/><path d="M5.5 3.8H15M5.5 5.6H15M5.5 7.4H15" stroke="#cfcfd1" stroke-width="0.8"/><path d="M13 22L22.5 10" stroke="#cfcfd1" stroke-width="2.4"/></svg>
<svg style="position:absolute;left:366px;top:103px;" width="24" height="24" viewBox="0 0 24 24"><path d="M5 1C1 1 0 5 1.5 8S6 10 8 12C10 14 9 19 13 19C17 19 16 13 16 10C16 7 21 7 21 4S17 1 13 2S9 1 5 1Z" fill="#dcdcde" stroke="#cfcfd1" stroke-width="0.8"/><rect x="12.5" y="12" width="10.5" height="11" rx="1.5" fill="#d4d4d6"/><path d="M17.7 14V21M14.5 17.5H21M15.5 15.3L20 19.7M20 15.3L15.5 19.7" stroke="#eeeef0" stroke-width="1"/></svg>
<svg style="position:absolute;left:400px;top:104px;" width="22" height="22" viewBox="0 0 22 22"><circle cx="5" cy="3.5" r="2.5" fill="none" stroke="#c8c8ca" stroke-width="0.9"/><circle cx="5" cy="3.5" r="0.9" fill="#c8c8ca"/><path d="M8 3.5H18M4.5 6L0.5 20" stroke="#c8c8ca" stroke-width="0.8"/><path d="M7.5 19L16.5 8M8.5 8L18 19" stroke="#cfcfd1" stroke-width="2.4"/></svg>
<svg style="position:absolute;left:428px;top:116px;" width="8" height="5" viewBox="0 0 8 5"><path d="M0 0H8L4 4.5Z" fill="#a4a4a6"/></svg>
<svg style="position:absolute;left:445px;top:104px;" width="21" height="22" viewBox="0 0 21 22"><rect x="0.7" y="1.5" width="19" height="5" fill="#d8d8da" stroke="#cfcfd1" stroke-width="0.6"/><rect x="0.7" y="8" width="19" height="5.5" fill="#d8d8da" stroke="#cfcfd1" stroke-width="0.6"/><rect x="0.7" y="15" width="19" height="5.5" fill="#d8d8da" stroke="#cfcfd1" stroke-width="0.6"/><path d="M7.5 21L19 0.7" stroke="#e4e4e6" stroke-width="3.4"/><path d="M7.5 21L19 0.7" stroke="#cfcfd1" stroke-width="1" fill="none"/></svg>
<svg style="position:absolute;left:478px;top:104px;" width="19" height="22" viewBox="0 0 19 22"><rect x="0.5" y="0.5" width="14" height="4" fill="#e0e0e2" stroke="#cfcfd1" stroke-width="0.7"/><rect x="3" y="3.5" width="15" height="18" fill="#e4e4e6" stroke="#cfcfd1" stroke-width="0.9"/><path d="M7 6V19M10.5 6V19M14 6V19" stroke="#cfcfd1" stroke-width="1"/><circle cx="10.5" cy="12" r="0.7" fill="#f0c0b8"/><circle cx="14" cy="16" r="0.7" fill="#f0c0b8"/></svg>
<svg style="position:absolute;left:510px;top:107px;" width="22" height="17" viewBox="0 0 22 17"><circle cx="18.5" cy="4" r="3" fill="none" stroke="#d0d0d2" stroke-width="1.4"/><circle cx="18.5" cy="13" r="3" fill="none" stroke="#d0d0d2" stroke-width="1.4"/><path d="M0.5 1.5L16 11.5M0.5 7.5L16 5" stroke="#d4d4d6" stroke-width="1.8"/></svg>
<svg style="position:absolute;left:546px;top:105px;" width="16" height="21" viewBox="0 0 16 21"><path d="M5 0.5H12L15.5 4V15H5Z" fill="#f4f4f6" stroke="#d0d0d2" stroke-width="0.8"/><path d="M0.5 5H7.5L10.5 8V19.5H0.5Z" fill="#f4f4f6" stroke="#c8c8ca" stroke-width="0.9"/><path d="M2 11H9M2 13H9M2 15H9M2 17H9" stroke="#d0d0d2" stroke-width="0.7"/></svg>
<svg style="position:absolute;left:579px;top:104px;" width="16" height="22" viewBox="0 0 16 22"><rect x="0.7" y="1.5" width="14.5" height="19.5" fill="#eeeef0" stroke="#c8c8ca" stroke-width="0.9"/><rect x="4" y="0.5" width="8" height="3" fill="#d8d8da"/><path d="M3 5H10.5L13 7.5V19H3Z" fill="#f8f8fa" stroke="#c8c8ca" stroke-width="0.8"/><path d="M4.5 10H11M4.5 12H11M4.5 14H11M4.5 16H11" stroke="#d0d0d2" stroke-width="0.6"/></svg>
<svg style="position:absolute;left:611px;top:106px;" width="19" height="20" viewBox="0 0 19 20"><path d="M0.5 8L7.5 1V5C14 5 18 8 18 13C18 17 15.5 19 12.5 19.5C14.5 17.5 14 12 7.5 11.5V15Z" fill="#d4d4d6"/></svg>
<svg style="position:absolute;left:643.5px;top:106px;" width="19" height="20" viewBox="0 0 19 20"><path d="M18.5 8L11.5 1V5C5 5 1 8 1 13C1 17 3.5 19 6.5 19.5C4.5 17.5 5 12 11.5 11.5V15Z" fill="#d4d4d6"/></svg>
<svg style="position:absolute;left:678px;top:107px;" width="4" height="17" viewBox="0 0 4 17"><rect x="0" y="0" width="1" height="1" fill="#b0b0b4"/><rect x="0" y="3" width="1" height="1" fill="#b0b0b4"/><rect x="0" y="6" width="1" height="1" fill="#b0b0b4"/><rect x="0" y="9" width="1" height="1" fill="#b0b0b4"/><rect x="0" y="12" width="1" height="1" fill="#b0b0b4"/><rect x="0" y="15" width="1" height="1" fill="#b0b0b4"/><rect x="3" y="0" width="1" height="1" fill="#b0b0b4"/><rect x="3" y="3" width="1" height="1" fill="#b0b0b4"/><rect x="3" y="6" width="1" height="1" fill="#b0b0b4"/><rect x="3" y="9" width="1" height="1" fill="#b0b0b4"/><rect x="3" y="12" width="1" height="1" fill="#b0b0b4"/><rect x="3" y="15" width="1" height="1" fill="#b0b0b4"/></svg>
<svg style="position:absolute;left:691px;top:103px;" width="21" height="23" viewBox="0 0 21 23"><path d="M10 1.5L19.5 19H1Z" fill="none" stroke="#6aa83a" stroke-width="3.2" stroke-linejoin="round"/><path d="M10 1.5L19.5 19H1Z" fill="none" stroke="#d8c840" stroke-width="0.8" stroke-dasharray="1 1.5"/><rect x="0" y="19.5" width="20.5" height="2.5" fill="#f2d23a"/><path d="M0 22.3H20.5" stroke="#e05a30" stroke-width="1" stroke-dasharray="1 1"/></svg>
<svg style="position:absolute;left:722.5px;top:103px;" width="26" height="25" viewBox="0 0 26 25"><circle cx="11" cy="11" r="10.2" fill="#a8c2e4" stroke="#5a7fb8" stroke-width="1"/><path d="M4 6C6 5 7 8 5 11S4 16 7 17M15 3C13 6 15 8 17 9S19 14 16 16M9 9C11 9 12 12 10 14" fill="none" stroke="#606468" stroke-width="2.4"/><path d="M1 11H21M11 1V21M2.5 6H19.5M2.5 16H19.5" stroke="#e8eef6" stroke-width="0.5"/><ellipse cx="11" cy="11" rx="5" ry="10.2" fill="none" stroke="#e8eef6" stroke-width="0.5"/><rect x="15" y="15" width="9.5" height="9.5" rx="1.5" fill="#5b9a5b"/><path d="M19.75 16.8V22.7 M16.8 19.75H22.7" stroke="#fff" stroke-width="2"/></svg>
<svg style="position:absolute;left:755.5px;top:103px;" width="26" height="25" viewBox="0 0 26 25"><circle cx="11" cy="11" r="10.2" fill="#a8c2e4" stroke="#5a7fb8" stroke-width="1"/><path d="M4 6C6 5 7 8 5 11S4 16 7 17M15 3C13 6 15 8 17 9S19 14 16 16M9 9C11 9 12 12 10 14" fill="none" stroke="#606468" stroke-width="2.4"/><path d="M1 11H21M11 1V21M2.5 6H19.5M2.5 16H19.5" stroke="#e8eef6" stroke-width="0.5"/><ellipse cx="11" cy="11" rx="5" ry="10.2" fill="none" stroke="#e8eef6" stroke-width="0.5"/><rect x="15" y="15" width="9.5" height="9.5" rx="1.5" fill="#5b9a5b"/><circle cx="19" cy="19" r="2.5" fill="none" stroke="#fff" stroke-width="1.3"/><path d="M20.8 20.8L23 23" stroke="#fff" stroke-width="1.5"/></svg>
<svg style="position:absolute;left:788.5px;top:103px;" width="25" height="25" viewBox="0 0 25 25"><circle cx="11" cy="11" r="10.2" fill="#a8c2e4" stroke="#5a7fb8" stroke-width="1"/><path d="M4 6C6 5 7 8 5 11S4 16 7 17M15 3C13 6 15 8 17 9S19 14 16 16M9 9C11 9 12 12 10 14" fill="none" stroke="#606468" stroke-width="2.4"/><path d="M1 11H21M11 1V21M2.5 6H19.5M2.5 16H19.5" stroke="#e8eef6" stroke-width="0.5"/><ellipse cx="11" cy="11" rx="5" ry="10.2" fill="none" stroke="#e8eef6" stroke-width="0.5"/><path d="M5 17C3 18 2 20 2 21C2 23 4 24 6 24S10 23 10 21V18H14V21C14 23 16 24 18 24S22 23 22 21C22 20 21 18 19 17L16 14H8Z" fill="#111"/><ellipse cx="6" cy="21" rx="2.8" ry="1.7" fill="#fff"/><ellipse cx="18" cy="21" rx="2.8" ry="1.7" fill="#fff"/></svg>
<svg style="position:absolute;left:826px;top:107px;" width="4" height="17" viewBox="0 0 4 17"><rect x="0" y="0" width="1" height="1" fill="#b0b0b4"/><rect x="0" y="3" width="1" height="1" fill="#b0b0b4"/><rect x="0" y="6" width="1" height="1" fill="#b0b0b4"/><rect x="0" y="9" width="1" height="1" fill="#b0b0b4"/><rect x="0" y="12" width="1" height="1" fill="#b0b0b4"/><rect x="0" y="15" width="1" height="1" fill="#b0b0b4"/><rect x="3" y="0" width="1" height="1" fill="#b0b0b4"/><rect x="3" y="3" width="1" height="1" fill="#b0b0b4"/><rect x="3" y="6" width="1" height="1" fill="#b0b0b4"/><rect x="3" y="9" width="1" height="1" fill="#b0b0b4"/><rect x="3" y="12" width="1" height="1" fill="#b0b0b4"/><rect x="3" y="15" width="1" height="1" fill="#b0b0b4"/></svg>
<svg style="position:absolute;left:838px;top:107px;" width="25" height="15" viewBox="0 0 25 15"><text x="0" y="12.3" font-family="Liberation Sans" font-weight="bold" font-size="14.5" fill="#000" letter-spacing="-0.3">QM</text></svg>
<svg style="position:absolute;left:871px;top:103px;" width="25" height="24" viewBox="0 0 25 24"><rect x="0" y="0" width="24.5" height="24" fill="#000"/><path d="M1.2 1.5L6 4L1.2 6.5" fill="none" stroke="#fff" stroke-width="1.2"/><path d="M8.5 10H14" stroke="#fff" stroke-width="1.2"/><text x="0.5" y="22.5" font-family="Liberation Sans" font-weight="bold" font-size="12.5" fill="#fff" letter-spacing="-0.5">QM</text></svg>
<svg style="position:absolute;left:908px;top:107px;" width="4" height="17" viewBox="0 0 4 17"><rect x="0" y="0" width="1" height="1" fill="#b0b0b4"/><rect x="0" y="3" width="1" height="1" fill="#b0b0b4"/><rect x="0" y="6" width="1" height="1" fill="#b0b0b4"/><rect x="0" y="9" width="1" height="1" fill="#b0b0b4"/><rect x="0" y="12" width="1" height="1" fill="#b0b0b4"/><rect x="0" y="15" width="1" height="1" fill="#b0b0b4"/><rect x="3" y="0" width="1" height="1" fill="#b0b0b4"/><rect x="3" y="3" width="1" height="1" fill="#b0b0b4"/><rect x="3" y="6" width="1" height="1" fill="#b0b0b4"/><rect x="3" y="9" width="1" height="1" fill="#b0b0b4"/><rect x="3" y="12" width="1" height="1" fill="#b0b0b4"/><rect x="3" y="15" width="1" height="1" fill="#b0b0b4"/></svg>
<svg style="position:absolute;left:922px;top:104px;" width="21" height="23" viewBox="0 0 21 23"><path d="M10 0.8C6 0.8 5 2.2 5 4V6.5H10.5V7.5H3C1 7.5 0.5 9.5 0.5 11.5S1 15.5 3 15.5H5V12.5C5 11 6 10 7.5 10H13C14.5 10 15 9 15 7.5V4C15 2 13.5 0.8 10 0.8Z" fill="#3f74b0"/><path d="M10.5 21.5C14.5 21.5 15.5 20 15.5 18V15.5H10V14.5H17.5C19.5 14.5 20 12.5 20 10.5S19.5 6.5 17.5 6.5H15.5V9.5C15.5 11 14.5 12 13 12H7.5C6 12 5.5 13 5.5 14.5V18C5.5 20 7 21.5 10.5 21.5Z" fill="#f2d64a"/><path d="M15.5 17.5L20.5 19.5L15.5 21.5" fill="none" stroke="#333" stroke-width="1"/></svg>
<svg style="position:absolute;left:956px;top:103px;" width="17" height="22" viewBox="0 0 17 22"><circle cx="8.5" cy="13.5" r="7.3" fill="#fff" stroke="#222" stroke-width="1.4"/><rect x="7" y="0.5" width="3" height="2.5" fill="#222"/><path d="M8.5 3V6M8.5 9V14M1.5 5L3.5 7M15.5 5L13.5 7" stroke="#222" stroke-width="1.2"/></svg>
<svg style="position:absolute;left:986px;top:103px;" width="24" height="24" viewBox="0 0 24 24"><rect x="0.8" y="0.8" width="22.5" height="22.5" rx="5.5" fill="#f3c418" stroke="#2a2a2a" stroke-width="1.2"/><text x="3.5" y="10" font-family="Liberation Sans" font-weight="bold" font-size="7.5" fill="#111">Aa</text><path d="M14 10.5H20M14 13H20M14 15.5H20" stroke="#111" stroke-width="1.2"/><path d="M8.5 11V19M6 16.5L8.5 19.5L11 16.5" fill="none" stroke="#111" stroke-width="1.3"/></svg>
<svg style="position:absolute;left:1019px;top:103px;" width="24" height="24" viewBox="0 0 24 24"><rect x="0.8" y="0.8" width="22.5" height="22.5" rx="5.5" fill="#18f0f0" stroke="#2a2a2a" stroke-width="1.2"/><text x="3.5" y="10" font-family="Liberation Sans" font-weight="bold" font-size="7.5" fill="#111">Aa</text><rect x="15" y="10" width="4.5" height="4.5" fill="#fff" stroke="#555" stroke-width="0.7"/><path d="M7.5 19V12M5.5 14L7.5 11.5L9.5 14M11 12V19.5M9 17.5L11 20L13 17.5" fill="none" stroke="#111" stroke-width="1.2"/></svg>
<svg style="position:absolute;left:1052px;top:103px;" width="25" height="25" viewBox="0 0 25 25"><rect x="0.5" y="0.5" width="23.5" height="14.5" rx="3.5" fill="#5a86c4"/><text x="2.5" y="11.5" font-family="Liberation Sans" font-weight="bold" font-size="10" fill="#fff" letter-spacing="-0.7">KML</text><rect x="15" y="15" width="9.3" height="9.3" rx="1.5" fill="#5b9a5b"/><path d="M19.65 16.8V22.5 M16.8 19.65H22.5" stroke="#fff" stroke-width="2"/></svg>
<svg style="position:absolute;left:1113px;top:112px;" width="8" height="7" viewBox="0 0 8 7"><path d="M0.8 0.6L3.4 3.3L0.8 6M4.6 0.6L7.2 3.3L4.6 6" fill="none" stroke="#3a3a3a" stroke-width="1.25"/></svg>
<svg style="position:absolute;left:1130px;top:107px;" width="4" height="17" viewBox="0 0 4 17"><rect x="0" y="0" width="1" height="1" fill="#b0b0b4"/><rect x="0" y="3" width="1" height="1" fill="#b0b0b4"/><rect x="0" y="6" width="1" height="1" fill="#b0b0b4"/><rect x="0" y="9" width="1" height="1" fill="#b0b0b4"/><rect x="0" y="12" width="1" height="1" fill="#b0b0b4"/><rect x="0" y="15" width="1" height="1" fill="#b0b0b4"/><rect x="3" y="0" width="1" height="1" fill="#b0b0b4"/><rect x="3" y="3" width="1" height="1" fill="#b0b0b4"/><rect x="3" y="6" width="1" height="1" fill="#b0b0b4"/><rect x="3" y="9" width="1" height="1" fill="#b0b0b4"/><rect x="3" y="12" width="1" height="1" fill="#b0b0b4"/><rect x="3" y="15" width="1" height="1" fill="#b0b0b4"/></svg>
<svg style="position:absolute;left:1142px;top:103px;" width="24" height="24" viewBox="0 0 24 24"><path d="M4 7C7 4 12 3 16 3S22 5 21 9C20 12 16 11 13 13S10 16 9 18C7 19 4 17 3 14S2 9 4 7Z" fill="#5b84c4" stroke="#3a4d6a" stroke-width="0.6"/><path d="M3 3L6 7M21 3L17 7M5.5 8.5L13 13" stroke="#3a4d6a" stroke-width="0.8"/><path d="M2.8 22L6 17" stroke="#333" stroke-width="0.8"/><circle cx="3" cy="2.7" r="2" fill="#f0e050" stroke="#888" stroke-width="0.5"/><circle cx="21.5" cy="2.7" r="2" fill="#f0e050" stroke="#888" stroke-width="0.5"/><circle cx="11.5" cy="7" r="1.6" fill="#f0e050" stroke="#888" stroke-width="0.5"/><circle cx="2.8" cy="21.3" r="2" fill="#f0e050" stroke="#888" stroke-width="0.5"/><path d="M13 18.5L15.5 22L21.5 11" fill="none" stroke="#d8c820" stroke-width="2"/><path d="M13 18.5L15.5 22L21.5 11" fill="none" stroke="#333" stroke-width="0.5"/></svg>
<svg style="position:absolute;left:1175px;top:112px;" width="8" height="7" viewBox="0 0 8 7"><path d="M0.8 0.6L3.4 3.3L0.8 6M4.6 0.6L7.2 3.3L4.6 6" fill="none" stroke="#3a3a3a" stroke-width="1.25"/></svg>
<svg style="position:absolute;left:1192px;top:107px;" width="4" height="17" viewBox="0 0 4 17"><rect x="0" y="0" width="1" height="1" fill="#b0b0b4"/><rect x="0" y="3" width="1" height="1" fill="#b0b0b4"/><rect x="0" y="6" width="1" height="1" fill="#b0b0b4"/><rect x="0" y="9" width="1" height="1" fill="#b0b0b4"/><rect x="0" y="12" width="1" height="1" fill="#b0b0b4"/><rect x="0" y="15" width="1" height="1" fill="#b0b0b4"/><rect x="3" y="0" width="1" height="1" fill="#b0b0b4"/><rect x="3" y="3" width="1" height="1" fill="#b0b0b4"/><rect x="3" y="6" width="1" height="1" fill="#b0b0b4"/><rect x="3" y="9" width="1" height="1" fill="#b0b0b4"/><rect x="3" y="12" width="1" height="1" fill="#b0b0b4"/><rect x="3" y="15" width="1" height="1" fill="#b0b0b4"/></svg>
<svg style="position:absolute;left:1206px;top:104px;" width="23" height="23" viewBox="0 0 23 23"><path d="M2 22V8C2 5 5 2 9 2H19" fill="none" stroke="#d4d4d6" stroke-width="2"/><circle cx="2.5" cy="3" r="1.7" fill="#eee" stroke="#cfcfd1" stroke-width="0.8"/><circle cx="19" cy="2" r="1.7" fill="#eee" stroke="#cfcfd1" stroke-width="0.8"/><rect x="11.5" y="11" width="11" height="11" rx="1.5" fill="#d4d4d6"/><path d="M17 13V20M13.5 16.5H20.5M14.7 14.2L19.3 18.8M19.3 14.2L14.7 18.8" stroke="#eeeef0" stroke-width="1"/></svg>
<svg style="position:absolute;left:1234.5px;top:114px;" width="8" height="5" viewBox="0 0 8 5"><path d="M0 0H8L4 4.5Z" fill="#a4a4a6"/></svg>
<svg style="position:absolute;left:1249px;top:112px;" width="8" height="7" viewBox="0 0 8 7"><path d="M0.8 0.6L3.4 3.3L0.8 6M4.6 0.6L7.2 3.3L4.6 6" fill="none" stroke="#3a3a3a" stroke-width="1.25"/></svg>
<svg style="position:absolute;left:1266px;top:107px;" width="4" height="17" viewBox="0 0 4 17"><rect x="0" y="0" width="1" height="1" fill="#b0b0b4"/><rect x="0" y="3" width="1" height="1" fill="#b0b0b4"/><rect x="0" y="6" width="1" height="1" fill="#b0b0b4"/><rect x="0" y="9" width="1" height="1" fill="#b0b0b4"/><rect x="0" y="12" width="1" height="1" fill="#b0b0b4"/><rect x="0" y="15" width="1" height="1" fill="#b0b0b4"/><rect x="3" y="0" width="1" height="1" fill="#b0b0b4"/><rect x="3" y="3" width="1" height="1" fill="#b0b0b4"/><rect x="3" y="6" width="1" height="1" fill="#b0b0b4"/><rect x="3" y="9" width="1" height="1" fill="#b0b0b4"/><rect x="3" y="12" width="1" height="1" fill="#b0b0b4"/><rect x="3" y="15" width="1" height="1" fill="#b0b0b4"/></svg>
<svg style="position:absolute;left:1279px;top:105px;" width="22" height="22" viewBox="0 0 22 22"><path d="M10.9 2.8L16.54 8.46A5 5 0 0 1 9.46 15.54L3.8 9.9" fill="none" stroke="#222" stroke-width="7"/><path d="M10.9 2.8L16.54 8.46A5 5 0 0 1 9.46 15.54L3.8 9.9" fill="none" stroke="#c42a22" stroke-width="5.4"/><path d="M10.9 2.8L13.2 5.1M3.8 9.9L6.1 12.2" stroke="#fff" stroke-width="5.2"/></svg>
<svg style="position:absolute;left:1311px;top:112px;" width="8" height="7" viewBox="0 0 8 7"><path d="M0.8 0.6L3.4 3.3L0.8 6M4.6 0.6L7.2 3.3L4.6 6" fill="none" stroke="#3a3a3a" stroke-width="1.25"/></svg>
<svg style="position:absolute;left:1328px;top:107px;" width="4" height="17" viewBox="0 0 4 17"><rect x="0" y="0" width="1" height="1" fill="#b0b0b4"/><rect x="0" y="3" width="1" height="1" fill="#b0b0b4"/><rect x="0" y="6" width="1" height="1" fill="#b0b0b4"/><rect x="0" y="9" width="1" height="1" fill="#b0b0b4"/><rect x="0" y="12" width="1" height="1" fill="#b0b0b4"/><rect x="0" y="15" width="1" height="1" fill="#b0b0b4"/><rect x="3" y="0" width="1" height="1" fill="#b0b0b4"/><rect x="3" y="3" width="1" height="1" fill="#b0b0b4"/><rect x="3" y="6" width="1" height="1" fill="#b0b0b4"/><rect x="3" y="9" width="1" height="1" fill="#b0b0b4"/><rect x="3" y="12" width="1" height="1" fill="#b0b0b4"/><rect x="3" y="15" width="1" height="1" fill="#b0b0b4"/></svg>
<svg style="position:absolute;left:1340px;top:106px;" width="21" height="12" viewBox="0 0 21 12"><path d="M0.5 6L5 0.5H20.5V11.5H5Z" fill="#dcdcde" stroke="#cfcfd1" stroke-width="0.8"/><text x="5" y="9.3" font-family="Liberation Serif" font-weight="bold" font-size="9.5" fill="#f2f2f4">abc</text></svg>
<svg style="position:absolute;left:1373px;top:112px;" width="8" height="7" viewBox="0 0 8 7"><path d="M0.8 0.6L3.4 3.3L0.8 6M4.6 0.6L7.2 3.3L4.6 6" fill="none" stroke="#3a3a3a" stroke-width="1.25"/></svg>
<svg style="position:absolute;left:1390px;top:107px;" width="4" height="17" viewBox="0 0 4 17"><rect x="0" y="0" width="1" height="1" fill="#b0b0b4"/><rect x="0" y="3" width="1" height="1" fill="#b0b0b4"/><rect x="0" y="6" width="1" height="1" fill="#b0b0b4"/><rect x="0" y="9" width="1" height="1" fill="#b0b0b4"/><rect x="0" y="12" width="1" height="1" fill="#b0b0b4"/><rect x="0" y="15" width="1" height="1" fill="#b0b0b4"/><rect x="3" y="0" width="1" height="1" fill="#b0b0b4"/><rect x="3" y="3" width="1" height="1" fill="#b0b0b4"/><rect x="3" y="6" width="1" height="1" fill="#b0b0b4"/><rect x="3" y="9" width="1" height="1" fill="#b0b0b4"/><rect x="3" y="12" width="1" height="1" fill="#b0b0b4"/><rect x="3" y="15" width="1" height="1" fill="#b0b0b4"/></svg>
<svg style="position:absolute;left:1403px;top:104px;" width="22" height="24" viewBox="0 0 22 24"><rect x="0.5" y="0.5" width="12" height="11" fill="none" stroke="#d4d4d6" stroke-width="1"/><path d="M0.5 0.5L12.5 11.5M12.5 0.5L0.5 11.5" stroke="#d4d4d6" stroke-width="0.9"/><rect x="11.5" y="0.5" width="10" height="12" fill="none" stroke="#d4d4d6" stroke-width="1"/><rect x="0.5" y="11.5" width="12" height="11" fill="none" stroke="#d4d4d6" stroke-width="1"/><path d="M0.5 17H12.5" stroke="#d4d4d6"/><path d="M8 22L18.5 2L21 3.5L10.5 23Z" fill="#e4e4e6" stroke="#c8c8ca" stroke-width="0.8"/></svg>
<svg style="position:absolute;left:1435px;top:112px;" width="8" height="7" viewBox="0 0 8 7"><path d="M0.8 0.6L3.4 3.3L0.8 6M4.6 0.6L7.2 3.3L4.6 6" fill="none" stroke="#3a3a3a" stroke-width="1.25"/></svg>
<div style="position:absolute;left:2px;top:135px;width:50px;height:767px;background:linear-gradient(90deg,#f7f6f9,#efeef3)"></div>
<div style="position:absolute;left:52px;top:135px;width:1px;height:767px;background:#a8a8ac"></div>
<svg style="position:absolute;left:21px;top:140px;" width="18" height="4" viewBox="0 0 18 4"><rect x="0" y="0" width="1" height="1" fill="#b8b8bc"/><rect x="0" y="3" width="1" height="1" fill="#b8b8bc"/><rect x="3" y="0" width="1" height="1" fill="#b8b8bc"/><rect x="3" y="3" width="1" height="1" fill="#b8b8bc"/><rect x="6" y="0" width="1" height="1" fill="#b8b8bc"/><rect x="6" y="3" width="1" height="1" fill="#b8b8bc"/><rect x="9" y="0" width="1" height="1" fill="#b8b8bc"/><rect x="9" y="3" width="1" height="1" fill="#b8b8bc"/><rect x="12" y="0" width="1" height="1" fill="#b8b8bc"/><rect x="12" y="3" width="1" height="1" fill="#b8b8bc"/><rect x="15" y="0" width="1" height="1" fill="#b8b8bc"/><rect x="15" y="3" width="1" height="1" fill="#b8b8bc"/></svg>
<svg style="position:absolute;left:16px;top:151px;" width="24" height="24" viewBox="0 0 24 24"><path d="M0.6 0.6L23 23.2H0.6Z" fill="#dadadc" stroke="#c8c8ca" stroke-width="1.1"/><path d="M5 13.5L11 19.5H5Z" fill="#f4f3f6" stroke="#d8c8c0" stroke-width="0.9"/><rect x="15" y="1" width="7" height="21.5" fill="#e4e4e6" stroke="#c8c8ca" stroke-width="1"/><path d="M18 4H21M18 7H21M18 10H21M18 13H21M18 16H21" stroke="#d0d0d2" stroke-width="0.6"/></svg>
<svg style="position:absolute;left:12px;top:185px;" width="20" height="20" viewBox="0 0 20 20"><path d="M2.5 17.5L17 3" stroke="#dcdcde" stroke-width="1.1"/><rect x="0.5" y="15.8" width="3.5" height="3.5" fill="#f4f4f6" stroke="#cfcfd1" stroke-width="0.8"/><rect x="15.5" y="0.5" width="3.5" height="3.5" fill="#f4f4f6" stroke="#cfcfd1" stroke-width="0.8"/></svg>
<svg style="position:absolute;left:40px;top:193px;" width="8" height="5" viewBox="0 0 8 5"><path d="M0 0H8L4 4.5Z" fill="#a0a0a2"/></svg>
<svg style="position:absolute;left:10px;top:215px;" width="24" height="24" viewBox="0 0 24 24"><path d="M5 1C2 1 1 3 2 5S8 6 11 5.5S19 6 19 3S15 0 11 1S7 1 5 1Z" fill="#dcdcde" stroke="#cfcfd1" stroke-width="0.5"/><path d="M4 5C0.5 5.5 0 9 1 11.5S6 14.5 10 13.5S15 13 17 12C20 11 20 7 17 6S13 6 10 5.5S6 4.8 4 5Z" fill="#d4d4d6" stroke="#cacacc" stroke-width="0.5"/><rect x="12.5" y="11.5" width="11.5" height="11.5" rx="2" fill="#d0d0d2"/><path d="M15 17.2H19.5M17.5 14.5L20.5 17.2L17.5 20" fill="none" stroke="#f6f6f8" stroke-width="1.8"/></svg>
<svg style="position:absolute;left:40.5px;top:225px;" width="8" height="5" viewBox="0 0 8 5"><path d="M0 0H8L4 4.5Z" fill="#a0a0a2"/></svg>
<svg style="position:absolute;left:17px;top:247.5px;" width="24" height="24" viewBox="0 0 24 24"><path d="M4.5 0.5C1.5 0.5 0 3 0.5 6C1 9 3 11.5 6 12C8.5 12.3 9.5 10 11.5 9.5C13.5 9 15 10.5 18 10.5C21 10.5 22 8 21.5 5.5C21 2.5 19 1 16.5 1.5C14 2 12.5 3 10.5 2.5C8.5 2 7 0.5 4.5 0.5Z" fill="#d8d8da" stroke="#cdcdcf" stroke-width="0.6"/><rect x="12" y="12.5" width="11" height="11" rx="1.8" fill="#d2d2d4"/><path d="M19.8 15.5A3 3 0 1 0 20.5 18.5" fill="none" stroke="#f4f4f6" stroke-width="1.4"/><path d="M18.5 14.5L20.5 15.8L19.5 17.8" fill="none" stroke="#f4f4f6" stroke-width="1"/></svg>
<svg style="position:absolute;left:17px;top:279.5px;" width="24" height="24" viewBox="0 0 24 24"><path d="M4.5 0.5C1.5 0.5 0 3 0.5 6C1 9 3 11.5 6 12C8.5 12.3 9.5 10 11.5 9.5C13.5 9 15 10.5 18 10.5C21 10.5 22 8 21.5 5.5C21 2.5 19 1 16.5 1.5C14 2 12.5 3 10.5 2.5C8.5 2 7 0.5 4.5 0.5Z" fill="#d8d8da" stroke="#cdcdcf" stroke-width="0.6"/><rect x="12" y="12.5" width="11" height="11" rx="1.8" fill="#d2d2d4"/><path d="M14 18H22M15.5 16L14 18L15.5 20M20.5 16L22 18L20.5 20" fill="none" stroke="#f4f4f6" stroke-width="1.3"/></svg>
<svg style="position:absolute;left:17px;top:311.5px;" width="24" height="24" viewBox="0 0 24 24"><circle cx="7" cy="7" r="6.5" fill="#dadadc" stroke="#cdcdcf" stroke-width="0.6"/><path d="M12 7L19.5 7.5L23 14L19.5 21L12 21L8.5 14Z" fill="#d8d8da" stroke="#c6c6c8" stroke-width="0.9"/><path d="M6.5 6.5L15 14.5M15 14.5V11.5M15 14.5H12" fill="none" stroke="#b4b4b6" stroke-width="0.9"/></svg>
<svg style="position:absolute;left:17px;top:343.5px;" width="24" height="24" viewBox="0 0 24 24"><path d="M4.5 0.5C1.5 0.5 0 3 0.5 6C1 9 3 11.5 6 12C8.5 12.3 9.5 10 11.5 9.5C13.5 9 15 10.5 18 10.5C21 10.5 22 8 21.5 5.5C21 2.5 19 1 16.5 1.5C14 2 12.5 3 10.5 2.5C8.5 2 7 0.5 4.5 0.5Z" fill="#d8d8da" stroke="#cdcdcf" stroke-width="0.6"/><ellipse cx="7.5" cy="5.5" rx="4.2" ry="2.6" fill="#eeeef0" stroke="#c8c8ca" stroke-width="0.7"/><rect x="12" y="12.5" width="11" height="11" rx="1.8" fill="#d2d2d4"/><path d="M17.5 14.5V21.5 M14 18.0H21 M15 15.5L20 20.5 M20 15.5L15 20.5" stroke="#f4f4f6" stroke-width="1"/><circle cx="17.5" cy="18.0" r="1.6" fill="#d2d2d4"/></svg>
<svg style="position:absolute;left:17px;top:375.5px;" width="24" height="24" viewBox="0 0 24 24"><path transform="translate(0,0)" d="M4.5 0.5C1.5 0.5 0 3 0.5 6C1 9 3 11.5 6 12C8.5 12.3 9.5 10 11.5 9.5C13.5 9 15 10.5 18 10.5C21 10.5 22 8 21.5 5.5C21 2.5 19 1 16.5 1.5C14 2 12.5 3 10.5 2.5C8.5 2 7 0.5 4.5 0.5Z" fill="#d8d8da" stroke="#cdcdcf" stroke-width="0.6"/><path d="M7 11.5C4 12.5 1 15.5 1 19C1 22 4 22 7 20S10 14 9 12Z" fill="#d4d4d6" stroke="#cacacc" stroke-width="0.5"/><rect x="12" y="12.5" width="11" height="11" rx="1.8" fill="#d2d2d4"/><path d="M17.5 14.5V21.5 M14 18.0H21 M15 15.5L20 20.5 M20 15.5L15 20.5" stroke="#f4f4f6" stroke-width="1"/><circle cx="17.5" cy="18.0" r="1.6" fill="#d2d2d4"/></svg>
<svg style="position:absolute;left:17px;top:407.5px;" width="24" height="24" viewBox="0 0 24 24"><path d="M4.5 0.5C1.5 0.5 0 3 0.5 6C1 9 3 11.5 6 12C8.5 12.3 9.5 10 11.5 9.5C13.5 9 15 10.5 18 10.5C21 10.5 22 8 21.5 5.5C21 2.5 19 1 16.5 1.5C14 2 12.5 3 10.5 2.5C8.5 2 7 0.5 4.5 0.5Z" fill="#d8d8da" stroke="#cdcdcf" stroke-width="0.6"/><ellipse cx="7.5" cy="5.5" rx="4.5" ry="3" fill="#d0d0d2" stroke="#c4c4c6" stroke-width="0.7"/><rect x="12" y="12.5" width="11" height="11" rx="1.8" fill="#d2d2d4"/><path d="M17.5 14.5V21.5 M14 18.0H21 M15 15.5L20 20.5 M20 15.5L15 20.5" stroke="#f4f4f6" stroke-width="1"/><circle cx="17.5" cy="18.0" r="1.6" fill="#d2d2d4"/></svg>
<svg style="position:absolute;left:17px;top:439.5px;" width="24" height="24" viewBox="0 0 24 24"><path d="M4.5 0.5C1.5 0.5 0 3 0.5 6C1 9 3 11.5 6 12C8.5 12.3 9.5 10 11.5 9.5C13.5 9 15 10.5 18 10.5C21 10.5 22 8 21.5 5.5C21 2.5 19 1 16.5 1.5C14 2 12.5 3 10.5 2.5C8.5 2 7 0.5 4.5 0.5Z" fill="#d8d8da" stroke="#cdcdcf" stroke-width="0.6"/><ellipse cx="7.5" cy="5.5" rx="4.2" ry="2.6" fill="#f2f2f4" stroke="#c8c8ca" stroke-width="0.7"/><rect x="12" y="12.5" width="11" height="11" fill="#dcdcde"/><path d="M14.5 15.0L20.5 21.0M20.5 15.0L14.5 21.0" stroke="#f4f4f6" stroke-width="1.6"/></svg>
<svg style="position:absolute;left:17px;top:471.5px;" width="24" height="24" viewBox="0 0 24 24"><path d="M4.5 0.5C1.5 0.5 0 3 0.5 6C1 9 3 11.5 6 12C8.5 12.3 9.5 10 11.5 9.5C13.5 9 15 10.5 18 10.5C21 10.5 22 8 21.5 5.5C21 2.5 19 1 16.5 1.5C14 2 12.5 3 10.5 2.5C8.5 2 7 0.5 4.5 0.5Z" fill="#d8d8da" stroke="#cdcdcf" stroke-width="0.6"/><path d="M7 11.5C4 12.5 1 15.5 1 19C1 22 4 22 7 20S10 14 9 12Z" fill="#d4d4d6" stroke="#cacacc" stroke-width="0.5"/><rect x="12" y="12.5" width="11" height="11" fill="#dcdcde"/><path d="M14.5 15.0L20.5 21.0M20.5 15.0L14.5 21.0" stroke="#f4f4f6" stroke-width="1.6"/></svg>
<svg style="position:absolute;left:17px;top:503.5px;" width="24" height="24" viewBox="0 0 24 24"><path d="M5 0.5C1.5 0.5 0 3 0.5 6.5C1 10 2 12 1.5 15C1 18 3 20.5 5.5 19.5C8 18.5 9 15 10.5 12.5C12 10 15 10.5 18 9.5C21 8.5 22 6 21 3.5C20 1 17.5 0.8 15 1.5C12 2.3 8.5 0.5 5 0.5Z" fill="#d6d6d8" stroke="#cbcbcd" stroke-width="0.6"/></svg>
<svg style="position:absolute;left:17px;top:535.5px;" width="24" height="24" viewBox="0 0 24 24"><path d="M15.5 0.5C19.5 0 22.5 3 21.5 7C20.5 11 16 12 13.5 15C11 18 8 21.5 4.5 21C1 20.5 -0.5 16.5 1.5 13C3.5 9.5 7 7.5 9 4.5C11 1.8 12.5 0.8 15.5 0.5Z" fill="#d4d4d6" stroke="#c8c8ca" stroke-width="0.6"/></svg>
<svg style="position:absolute;left:17px;top:567.5px;" width="24" height="24" viewBox="0 0 24 24"><path d="M1.8 1.8L6.8 12.8L10.5 4.8H14.5" fill="none" stroke="#d0d0d2" stroke-width="0.9"/><rect x="0.5" y="0.5" width="2.6" height="2.6" fill="#f4f4f6" stroke="#c6c6c8" stroke-width="0.7"/><rect x="5.5" y="11.5" width="2.6" height="2.6" fill="#f4f4f6" stroke="#c6c6c8" stroke-width="0.7"/><rect x="13.5" y="3.5" width="2.6" height="2.6" fill="#f4f4f6" stroke="#c6c6c8" stroke-width="0.7"/><path d="M16.2 4.8H19.5" stroke="#d0d0d2" stroke-width="0.9"/><rect x="19.5" y="3.5" width="2.6" height="2.6" fill="#f4f4f6" stroke="#c6c6c8" stroke-width="0.7"/><rect x="12" y="12.5" width="11" height="11" rx="1.8" fill="#d2d2d4"/><path d="M19.8 15.5A3 3 0 1 0 20.5 18.5" fill="none" stroke="#f4f4f6" stroke-width="1.4"/></svg>
<svg style="position:absolute;left:17px;top:598.5px;" width="24" height="24" viewBox="0 0 24 24"><path d="M8.5 0.5V23M0.5 12H22" stroke="#d4d4d6" stroke-width="1.3"/><circle cx="8.5" cy="12" r="2" fill="#f0f0f2" stroke="#c4c4c6" stroke-width="0.9"/><circle cx="15" cy="12" r="2" fill="#f0f0f2" stroke="#c4c4c6" stroke-width="0.9"/><rect x="13.5" y="1" width="6" height="6" fill="none" stroke="#cfcfd1" stroke-width="1.1"/><rect x="0.8" y="16" width="6" height="6" fill="none" stroke="#cfcfd1" stroke-width="1.1"/><path d="M15 14V23" stroke="#cfcfd1" stroke-width="1.1"/></svg>
<svg style="position:absolute;left:17px;top:632px;" width="24" height="24" viewBox="0 0 24 24"><ellipse cx="6.5" cy="6" rx="5.5" ry="5.5" fill="#d6d6d8" stroke="#cbcbcd" stroke-width="0.5"/><ellipse cx="16" cy="6" rx="5" ry="5.5" fill="#d6d6d8" stroke="#cbcbcd" stroke-width="0.5"/><path d="M12 0.5L10 12M9.5 12L14 16" stroke="#c4c4c6" stroke-width="0.9"/><ellipse cx="7.5" cy="17" rx="1.6" ry="3.2" transform="rotate(30 7.5 17)" fill="none" stroke="#c4c4c6" stroke-width="1.1"/><ellipse cx="15.5" cy="16.5" rx="1.6" ry="3" transform="rotate(-45 15.5 16.5)" fill="none" stroke="#c4c4c6" stroke-width="1.1"/></svg>
<svg style="position:absolute;left:17px;top:664px;" width="24" height="24" viewBox="0 0 24 24"><ellipse cx="6.5" cy="6" rx="5.5" ry="5.5" fill="#d6d6d8" stroke="#cbcbcd" stroke-width="0.5"/><ellipse cx="16" cy="6" rx="5" ry="5.5" fill="#d6d6d8" stroke="#cbcbcd" stroke-width="0.5"/><path d="M12 0.5L10 12M9.5 12L14 16" stroke="#c4c4c6" stroke-width="0.9"/><ellipse cx="7.5" cy="17" rx="1.6" ry="3.2" transform="rotate(30 7.5 17)" fill="none" stroke="#c4c4c6" stroke-width="1.1"/><ellipse cx="15.5" cy="16.5" rx="1.6" ry="3" transform="rotate(-45 15.5 16.5)" fill="none" stroke="#c4c4c6" stroke-width="1.1"/></svg>
<svg style="position:absolute;left:17px;top:694px;" width="24" height="24" viewBox="0 0 24 24"><path d="M4.5 0.8C0.5 1.5 0 7 2.5 9.5S8.5 11 10 8M12 8C13 11 19 11 21 8S20 0.5 16 0.8S11 2 10 3S8.5 0 4.5 0.8Z" fill="#d6d6d8" stroke="#cbcbcd" stroke-width="0.5"/><path d="M8 3H15M8 6H15M11.5 1.5V9" stroke="#c4c4c6" stroke-width="0.8"/><path d="M3 9C4 13 8 16 11 18.5" fill="none" stroke="#c4c4c6" stroke-width="0.9"/></svg>
<svg style="position:absolute;left:17px;top:727px;" width="23" height="23" viewBox="0 0 23 23"><path d="M1 2H22M1 8.5H22M1 15H22M1 21.5H22M11.5 0V23" stroke="#d8d8da" stroke-width="0.9"/><path d="M7.5 4L11.5 6L15.5 4M7.5 10.5L11.5 12.5L15.5 10.5M7.5 17L11.5 19L15.5 17" fill="none" stroke="#c4c4c6" stroke-width="0.8"/></svg>
<svg style="position:absolute;left:10px;top:759px;" width="24" height="24" viewBox="0 0 24 24"><path d="M8 22C3 20 1 14 4 9C6 6 9 5 11 5" fill="none" stroke="#d0d0d2" stroke-width="1.3"/><path d="M9 2L12 5L9 8" fill="none" stroke="#d0d0d2" stroke-width="1.2"/><path d="M13 2V12L22 7Z" fill="#d8d8da"/><path d="M13 12L9 23H19Z" fill="none" stroke="#d4d4d6" stroke-width="1"/></svg>
<svg style="position:absolute;left:40.5px;top:769px;" width="8" height="5" viewBox="0 0 8 5"><path d="M0 0H8L4 4.5Z" fill="#a0a0a2"/></svg>
<div style="position:absolute;left:0px;top:208px;width:8px;height:1px;background:#9a9a9e"></div>
<div style="position:absolute;left:0px;top:312px;width:8px;height:1px;background:#9a9a9e"></div>
<div style="position:absolute;left:0px;top:416px;width:8px;height:1px;background:#9a9a9e"></div>
<div style="position:absolute;left:0px;top:520px;width:8px;height:1px;background:#9a9a9e"></div>
<div style="position:absolute;left:0px;top:624px;width:8px;height:1px;background:#9a9a9e"></div>
<div style="position:absolute;left:0px;top:728px;width:8px;height:1px;background:#9a9a9e"></div>
<div style="position:absolute;left:0px;top:832px;width:8px;height:1px;background:#9a9a9e"></div>
<div style="position:absolute;left:53px;top:135px;width:436px;height:767px;background:#f1eff3"></div>
<div style="position:absolute;left:489px;top:135px;width:1px;height:767px;background:#a8a8ac"></div>
<div class="t" style="left:58.8px;top:138.69px;font-size:13.6px;color:#000;letter-spacing:0.354px;">Browser</div>
<svg style="position:absolute;left:456px;top:140px;" width="26" height="12" viewBox="0 0 26 12"><rect x="0.5" y="0.5" width="10.5" height="10.5" rx="2.2" fill="none" stroke="#6a6a6a" stroke-width="1"/><rect x="14.5" y="0.5" width="10.5" height="10.5" rx="2.2" fill="none" stroke="#6a6a6a" stroke-width="1"/><path d="M17 3L22.5 8.5M22.5 3L17 8.5" stroke="#555" stroke-width="2"/><rect x="2.8" y="4.8" width="3.6" height="3.6" fill="none" stroke="#6a6a6a" stroke-width="0.9"/><path d="M4.6 4.6V2.6H8.5V6.5H6.5" fill="none" stroke="#6a6a6a" stroke-width="0.9"/></svg>
<svg style="position:absolute;left:63px;top:164px;" width="16" height="16" viewBox="0 0 16 16"><rect x="0.6" y="0.6" width="11.5" height="11.5" fill="none" stroke="#666" stroke-width="1.1"/><circle cx="12.2" cy="12.2" r="2.6" fill="#b8dcb0" stroke="#5a9a50" stroke-width="0.9"/></svg>
<svg style="position:absolute;left:88px;top:163px;" width="16" height="16" viewBox="0 0 16 16"><path d="M1 7C1.5 3 6 0.5 10.5 1.8L12.5 0.2L14.5 6.8L8 6.5L9.8 4.7C7 3.8 4.8 5 4 7.2Z" fill="#5b84c4"/><path d="M14.5 9C14 13 9.5 15.5 5 14.2L3 15.8L1 9.2L7.5 9.5L5.7 11.3C8.5 12.2 10.7 11 11.5 8.8Z" fill="#5b84c4"/></svg>
<svg style="position:absolute;left:113px;top:163px;" width="15" height="16" viewBox="0 0 15 16"><path d="M0.5 2H14L9 8V14.5L6 13V8Z" fill="#6a8fc6" stroke="#3e5f92" stroke-width="0.8"/><rect x="0.5" y="0.5" width="13.5" height="2.5" fill="#f0e050" stroke="#3e5f92" stroke-width="0.6"/></svg>
<svg style="position:absolute;left:138px;top:163px;" width="16" height="16" viewBox="0 0 16 16"><path d="M0.8 2.5H5V14.5H0.8Z" fill="none" stroke="#888" stroke-width="0.9"/><rect x="4" y="5.5" width="2.6" height="2.6" fill="#f0c020" stroke="#c09010" stroke-width="0.5"/><rect x="4" y="10.5" width="2.6" height="2.6" fill="#f0c020" stroke="#c09010" stroke-width="0.5"/><path d="M9.5 14V6H6.8L11 0.8L15.2 6H12.5V14Z" fill="#5b84c4" stroke="#2f4670" stroke-width="0.7"/></svg>
<svg style="position:absolute;left:163px;top:164px;" width="15" height="15" viewBox="0 0 15 15"><circle cx="7" cy="7" r="6.8" fill="#6a8fc6"/><text x="4.8" y="11.5" font-family="Liberation Serif" font-style="italic" font-weight="bold" font-size="10" fill="#fff">i</text></svg>
<div style="position:absolute;left:54px;top:187px;width:429px;height:185px;background:#fff;box-sizing:border-box;border:1px solid #a9a9ad"></div>
<div style="position:absolute;left:55px;top:188px;width:413px;height:183px;overflow:hidden">
<div style="position:absolute;left:0px;top:84px;width:295px;height:21px;background:#efeef2"></div>
<svg style="position:absolute;left:6px;top:6.0px;" width="5" height="8" viewBox="0 0 5 8"><path d="M0 0L4.3 3.9L0 7.8Z" fill="#505050"/></svg>
<svg style="position:absolute;left:19px;top:2.0px;" width="15" height="14" viewBox="0 0 15 14"><path d="M0.5 0.5H5.5L7 2H14V13.3H0.5Z" fill="#3d7ed6" stroke="#1e3f78" stroke-width="0.9"/><path d="M2 3H13M2 5.5H13M2 8H13M2 10.5H13" stroke="#5fa0f0" stroke-width="0.8" stroke-dasharray="1 1"/></svg>
<div class="t" style="left:41.0px;top:3.33px;font-size:14.0px;color:#000;letter-spacing:0.224px;">G:\ (Google Drive)</div>
<svg style="position:absolute;left:3.5px;top:29.0px;" width="8" height="5" viewBox="0 0 8 5"><path d="M0 0H7.8L3.9 4.5Z" fill="#505050"/></svg>
<svg style="position:absolute;left:18px;top:22.0px;" width="17" height="16" viewBox="0 0 17 16"><path d="M3 5.5C3 2 5.5 0.3 8.5 0.3S14 2 14 5.5Z" fill="#8aa8d4" stroke="#555" stroke-width="0.5"/><path d="M5 2L8 4.5L7 6M10.5 1.5L11 4L13 5" fill="none" stroke="#3e5f92" stroke-width="1.4"/><path d="M0.7 5.5L8.5 2.8L16.3 5.5L8.5 8.5Z" fill="#9ab4da" stroke="#555" stroke-width="0.6"/><path d="M0.7 5.5L8.5 8.5V15.3L0.7 12Z" fill="#d8c020" stroke="#444" stroke-width="0.6"/><path d="M8.5 8.5L16.3 5.5V12L8.5 15.3Z" fill="#f6ec78" stroke="#444" stroke-width="0.6"/></svg>
<div class="t" style="left:41.0px;top:24.33px;font-size:14.0px;color:#000;letter-spacing:-0.172px;">GeoPackage</div>
<svg style="position:absolute;left:19.5px;top:50.0px;" width="8" height="5" viewBox="0 0 8 5"><path d="M0 0H7.8L3.9 4.5Z" fill="#505050"/></svg>
<svg style="position:absolute;left:36.5px;top:46.0px;" width="13" height="13" viewBox="0 0 13 13"><path d="M0.8 2.5V10C0.8 11.5 3.5 12.3 6.5 12.3S12.2 11.5 12.2 10V2.5" fill="#fafafa" stroke="#888" stroke-width="1"/><ellipse cx="6.5" cy="2.5" rx="5.7" ry="2" fill="#fafafa" stroke="#888" stroke-width="1"/><path d="M0.8 6.5C0.8 8 3.5 8.5 6.5 8.5S12.2 8 12.2 6.5" fill="none" stroke="#888" stroke-width="1"/></svg>
<div class="t" style="left:57.0px;top:45.33px;font-size:14.0px;color:#000;letter-spacing:0.284px;">atlante.gpkg</div>
<svg style="position:absolute;left:38px;top:69.0px;" width="5" height="8" viewBox="0 0 5 8"><path d="M0 0L4.3 3.9L0 7.8Z" fill="#505050"/></svg>
<svg style="position:absolute;left:50.5px;top:67.5px;" width="17" height="11" viewBox="0 0 17 11"><path d="M1.5 2C4 0 6 1.5 8.5 1.5S13 0 15.5 1.5C16.5 4 15.5 8 15.5 9.5C13 9 11 7.5 8.5 8S4 10 1.5 9.5C0.5 7 2 4 1.5 2Z" fill="#ebebed" stroke="#8a8a8a" stroke-width="0.9"/></svg>
<div class="t" style="left:73.0px;top:66.33px;font-size:14.0px;color:#000;letter-spacing:0.876px;">A4</div>
<svg style="position:absolute;left:38px;top:90.0px;" width="5" height="8" viewBox="0 0 5 8"><path d="M0 0L4.3 3.9L0 7.8Z" fill="#505050"/></svg>
<svg style="position:absolute;left:50.5px;top:88.5px;" width="17" height="11" viewBox="0 0 17 11"><path d="M1.5 2C4 0 6 1.5 8.5 1.5S13 0 15.5 1.5C16.5 4 15.5 8 15.5 9.5C13 9 11 7.5 8.5 8S4 10 1.5 9.5C0.5 7 2 4 1.5 2Z" fill="#ebebed" stroke="#8a8a8a" stroke-width="0.9"/></svg>
<div class="t" style="left:73.0px;top:87.33px;font-size:14.0px;color:#000;letter-spacing:0.188px;">LimiteComunale</div>
<svg style="position:absolute;left:50px;top:107.0px;" width="17" height="16" viewBox="0 0 17 16"><circle cx="7.5" cy="7.3" r="5.6" fill="none" stroke="#6cb33f" stroke-width="3"/><path d="M9.5 9.5L14.5 14.5" stroke="#6cb33f" stroke-width="3.2"/><circle cx="7.5" cy="7.3" r="1.6" fill="#ee7913"/></svg>
<div class="t" style="left:73.0px;top:108.33px;font-size:14.0px;color:#000;letter-spacing:0.482px;">progetto_atlas</div>
<svg style="position:absolute;left:38px;top:132.0px;" width="5" height="8" viewBox="0 0 5 8"><path d="M0 0L4.3 3.9L0 7.8Z" fill="#505050"/></svg>
<svg style="position:absolute;left:50.5px;top:130.5px;" width="17" height="11" viewBox="0 0 17 11"><path d="M1.5 2C4 0 6 1.5 8.5 1.5S13 0 15.5 1.5C16.5 4 15.5 8 15.5 9.5C13 9 11 7.5 8.5 8S4 10 1.5 9.5C0.5 7 2 4 1.5 2Z" fill="#ebebed" stroke="#8a8a8a" stroke-width="0.9"/></svg>
<div class="t" style="left:73.0px;top:129.33px;font-size:14.0px;color:#000;letter-spacing:0.392px;">riquadri_vettore_copertura</div>
<svg style="position:absolute;left:22px;top:153.0px;" width="5" height="8" viewBox="0 0 5 8"><path d="M0 0L4.3 3.9L0 7.8Z" fill="#505050"/></svg>
<svg style="position:absolute;left:36.5px;top:151.0px;" width="13" height="13" viewBox="0 0 13 13"><path d="M0.8 2.5V10C0.8 11.5 3.5 12.3 6.5 12.3S12.2 11.5 12.2 10V2.5" fill="#fafafa" stroke="#888" stroke-width="1"/><ellipse cx="6.5" cy="2.5" rx="5.7" ry="2" fill="#fafafa" stroke="#888" stroke-width="1"/><path d="M0.8 6.5C0.8 8 3.5 8.5 6.5 8.5S12.2 8 12.2 6.5" fill="none" stroke="#888" stroke-width="1"/></svg>
<div class="t" style="left:57.0px;top:150.33px;font-size:14.0px;color:#000;letter-spacing:-0.076px;">bbox_FG.gpkg</div>
<svg style="position:absolute;left:22px;top:174.0px;" width="5" height="8" viewBox="0 0 5 8"><path d="M0 0L4.3 3.9L0 7.8Z" fill="#505050"/></svg>
<svg style="position:absolute;left:36.5px;top:172.0px;" width="13" height="13" viewBox="0 0 13 13"><path d="M0.8 2.5V10C0.8 11.5 3.5 12.3 6.5 12.3S12.2 11.5 12.2 10V2.5" fill="#fafafa" stroke="#888" stroke-width="1"/><ellipse cx="6.5" cy="2.5" rx="5.7" ry="2" fill="#fafafa" stroke="#888" stroke-width="1"/><path d="M0.8 6.5C0.8 8 3.5 8.5 6.5 8.5S12.2 8 12.2 6.5" fill="none" stroke="#888" stroke-width="1"/></svg>
<div class="t" style="left:57.0px;top:171.33px;font-size:14.0px;color:#000;letter-spacing:0.090px;">comuni_rs.gpkg</div>
</div>
<div style="position:absolute;left:468px;top:188px;width:14px;height:183px;background:#dedee2;border-left:1px solid #c4c4c8;box-sizing:border-box"></div>
<div style="position:absolute;left:469px;top:188px;width:13px;height:13px;background:#f4f4f6"></div>
<div style="position:absolute;left:469px;top:213px;width:13px;height:28px;background:linear-gradient(90deg,#fdfdfe,#f0f0f3);border-top:1px solid #c8c8cc;border-bottom:1px solid #c8c8cc;box-sizing:border-box"></div>
<div style="position:absolute;left:469px;top:357px;width:13px;height:14px;background:#f4f4f6;border-top:1px solid #d8d8dc;box-sizing:border-box"></div>
<svg style="position:absolute;left:472px;top:191px;" width="8" height="5" viewBox="0 0 8 5"><path d="M0 4.5H8L4 0Z" fill="#505050"/></svg>
<svg style="position:absolute;left:472px;top:362px;" width="8" height="5" viewBox="0 0 8 5"><path d="M0 0H8L4 4.5Z" fill="#505050"/></svg>
<div style="position:absolute;left:262px;top:374px;width:1px;height:1px;background:#a8a8ac"></div>
<div style="position:absolute;left:486px;top:512px;width:1px;height:1px;background:#a8a8ac"></div>
<div style="position:absolute;left:265px;top:374px;width:1px;height:1px;background:#a8a8ac"></div>
<div style="position:absolute;left:486px;top:515px;width:1px;height:1px;background:#a8a8ac"></div>
<div style="position:absolute;left:268px;top:374px;width:1px;height:1px;background:#a8a8ac"></div>
<div style="position:absolute;left:486px;top:518px;width:1px;height:1px;background:#a8a8ac"></div>
<div style="position:absolute;left:271px;top:374px;width:1px;height:1px;background:#a8a8ac"></div>
<div style="position:absolute;left:486px;top:521px;width:1px;height:1px;background:#a8a8ac"></div>
<div style="position:absolute;left:274px;top:374px;width:1px;height:1px;background:#a8a8ac"></div>
<div style="position:absolute;left:486px;top:524px;width:1px;height:1px;background:#a8a8ac"></div>
<div style="position:absolute;left:277px;top:374px;width:1px;height:1px;background:#a8a8ac"></div>
<div style="position:absolute;left:486px;top:527px;width:1px;height:1px;background:#a8a8ac"></div>
<div class="t" style="left:58.6px;top:381.89px;font-size:13.6px;color:#000;letter-spacing:-0.005px;">Layer</div>
<svg style="position:absolute;left:456px;top:383px;" width="26" height="12" viewBox="0 0 26 12"><rect x="0.5" y="0.5" width="10.5" height="10.5" rx="2.2" fill="none" stroke="#6a6a6a" stroke-width="1"/><rect x="14.5" y="0.5" width="10.5" height="10.5" rx="2.2" fill="none" stroke="#6a6a6a" stroke-width="1"/><path d="M17 3L22.5 8.5M22.5 3L17 8.5" stroke="#555" stroke-width="2"/><rect x="2.8" y="4.8" width="3.6" height="3.6" fill="none" stroke="#6a6a6a" stroke-width="0.9"/><path d="M4.6 4.6V2.6H8.5V6.5H6.5" fill="none" stroke="#6a6a6a" stroke-width="0.9"/></svg>
<svg style="position:absolute;left:63px;top:408px;" width="15" height="15" viewBox="0 0 15 15"><path d="M6 9L12.5 1.5L14 3L8 10.5Z" fill="#c89030" stroke="#805010" stroke-width="0.5"/><path d="M0.5 8C3 6 6 6 8.5 9S8 13 6 14C4 13 2 11 0.5 8Z" fill="#f0d040"/><path d="M1 9C2 11 4 13 6 14" stroke="#d03020" stroke-width="2"/><path d="M2 6.5L7 8" stroke="#3a70c0" stroke-width="1.5"/></svg>
<svg style="position:absolute;left:87px;top:407px;" width="15" height="16" viewBox="0 0 15 16"><rect x="0.5" y="5" width="9" height="9" fill="none" stroke="#666" stroke-width="0.9"/><rect x="3.5" y="2.5" width="9" height="9" fill="#f4f4f4" stroke="#666" stroke-width="0.9"/><path d="M5.5 2V0.8H10V8" fill="none" stroke="#666" stroke-width="0.9"/><circle cx="12" cy="12.5" r="2.5" fill="#6ac060" stroke="#3a8030" stroke-width="0.6"/><path d="M12 11V14M10.5 12.5H13.5" stroke="#fff" stroke-width="0.9"/></svg>
<svg style="position:absolute;left:112px;top:409px;" width="14" height="12" viewBox="0 0 14 12"><path d="M0.5 7C3 3 10 3 13 7C10 11 3 11 0.5 7Z" fill="#e8e8ea" stroke="#888" stroke-width="0.8"/><circle cx="7" cy="6.8" r="3.2" fill="#5b84c4"/><circle cx="7" cy="6.8" r="1.3" fill="#1c2e50"/></svg>
<svg style="position:absolute;left:124px;top:419px;" width="6" height="4" viewBox="0 0 6 4"><path d="M0 0H6L3 3.5Z" fill="#404040"/></svg>
<svg style="position:absolute;left:137px;top:407px;" width="15" height="16" viewBox="0 0 15 16"><path d="M0.5 2.5H14L9 8.5V15L6 13.5V8.5Z" fill="#6a8fc6" stroke="#3e5f92" stroke-width="0.8"/><rect x="0.5" y="0.5" width="13.5" height="2.5" fill="#e8d850" stroke="#5a9a40" stroke-width="0.6"/></svg>
<svg style="position:absolute;left:150px;top:419px;" width="6" height="4" viewBox="0 0 6 4"><path d="M0 0H6L3 3.5Z" fill="#404040"/></svg>
<svg style="position:absolute;left:163px;top:407px;" width="15" height="16" viewBox="0 0 15 16"><rect x="6.5" y="7.5" width="8" height="8" fill="#e2e2e4"/><path d="M7 2C6.3 1 5 0.7 3.7 1S1.5 2.5 1.8 3.5S3.2 5 4.5 5C2.7 5 1 5.8 1 7.5S2.3 10 4 10S6.5 9.3 7.2 8.6" fill="none" stroke="#d2d2d4" stroke-width="1.2"/></svg>
<svg style="position:absolute;left:184.5px;top:413px;" width="8" height="5" viewBox="0 0 8 5"><path d="M0 0H8L4 4.5Z" fill="#a4a4a6"/></svg>
<svg style="position:absolute;left:200px;top:407px;" width="15" height="15" viewBox="0 0 15 15"><path d="M0.8 2H4.5V14H0.8Z" fill="none" stroke="#888" stroke-width="0.9"/><rect x="3.5" y="4.5" width="2.6" height="2.6" fill="#f0c020" stroke="#c09010" stroke-width="0.5"/><rect x="3.5" y="9.5" width="2.6" height="2.6" fill="#f0c020" stroke="#c09010" stroke-width="0.5"/><path d="M9 1V9H6.5L10.5 14.5L14.5 9H12V1Z" fill="#5b84c4" stroke="#2f4670" stroke-width="0.7"/></svg>
<svg style="position:absolute;left:225px;top:407px;" width="15" height="15" viewBox="0 0 15 15"><path d="M0.8 2H4.5V14H0.8Z" fill="none" stroke="#888" stroke-width="0.9"/><rect x="3.5" y="4.5" width="2.6" height="2.6" fill="#f0c020" stroke="#c09010" stroke-width="0.5"/><rect x="3.5" y="9.5" width="2.6" height="2.6" fill="#f0c020" stroke="#c09010" stroke-width="0.5"/><path d="M9 14V6H6.5L10.5 0.8L14.5 6H12V14Z" fill="#5b84c4" stroke="#2f4670" stroke-width="0.7"/></svg>
<svg style="position:absolute;left:250px;top:407px;" width="16" height="16" viewBox="0 0 16 16"><rect x="0.5" y="0.5" width="11.5" height="11.5" fill="none" stroke="#666" stroke-width="1"/><rect x="9" y="10" width="6" height="4.5" rx="1.5" fill="#d82a2a"/><path d="M10.3 12.2H13.7" stroke="#fff" stroke-width="1"/></svg>
<div style="position:absolute;left:54px;top:430px;width:429px;height:472px;background:#fff;box-sizing:border-box;border:1px solid #a9a9ad"></div>
<div style="position:absolute;left:490px;top:134px;width:956px;height:768px;background:#fff"></div>
<div style="position:absolute;left:490px;top:134px;width:956px;height:1px;background:#a0a0a4"></div>
<div style="position:absolute;left:490px;top:135px;width:956px;height:1px;background:#d4d4d8"></div>
<div style="position:absolute;left:490px;top:901px;width:956px;height:1px;background:#a9a9ad"></div>
<div style="position:absolute;left:2px;top:902px;width:1444px;height:32px;background:#f0eff3"></div>
<div style="position:absolute;left:6px;top:905px;width:253px;height:27px;background:#fff;border:1px solid #acacb0;border-radius:3px;box-sizing:border-box"></div>
<svg style="position:absolute;left:15px;top:911px;" width="14" height="14" viewBox="0 0 14 14"><circle cx="5.5" cy="5.5" r="4.2" fill="none" stroke="#7a7a7a" stroke-width="1.2"/><path d="M8.5 8.5L12.5 12.5" stroke="#7a7a7a" stroke-width="1.5"/></svg>
<div class="t" style="left:35.5px;top:911.13px;font-size:14.0px;color:#767676;letter-spacing:0.185px;">Digita per localizzare (Ctrl+K)</div>
<div class="t" style="left:386.4px;top:911.13px;font-size:14.0px;color:#000;letter-spacing:0.057px;">Coordinata</div>
<div style="position:absolute;left:461px;top:905.5px;width:124.5px;height:26px;background:#fff;border:1px solid #acacb0;border-radius:3px;box-sizing:border-box"></div>
<div class="t" style="left:467.0px;top:911.13px;font-size:14.0px;color:#000;letter-spacing:0.139px;">46,1935° 8,1608°</div>
<svg style="position:absolute;left:589px;top:908px;" width="18" height="18" viewBox="0 0 18 18"><g transform="rotate(-35 8.5 9)"><rect x="3.5" y="1.5" width="10" height="15" rx="5" fill="#fff" stroke="#111" stroke-width="1.6"/><path d="M6.5 2.5V8M9 2V8.5M11 2.5V8" stroke="#111" stroke-width="1.2"/><path d="M3.5 8.5H13.5" stroke="#111" stroke-width="1"/><circle cx="8.5" cy="12.5" r="1.2" fill="#111"/></g><path d="M15 3L16.5 2" stroke="#333" stroke-width="1"/><path d="M1 14L2.5 13.5" stroke="#333" stroke-width="1"/></svg>
<div class="t" style="left:619.3px;top:911.13px;font-size:14.0px;color:#000;letter-spacing:-0.455px;">Scala</div>
<div style="position:absolute;left:656.5px;top:905.5px;width:95.5px;height:26px;background:#fff;border:1px solid #acacb0;border-radius:3px;box-sizing:border-box"></div>
<div style="position:absolute;left:732px;top:906px;width:1px;height:25px;background:#d0d0d4"></div>
<svg style="position:absolute;left:737.5px;top:916.5px;" width="8" height="5" viewBox="0 0 8 5"><path d="M0 0H8L4 4.5Z" fill="#6a6a6a"/></svg>
<div class="t" style="left:660.0px;top:911.13px;font-size:14.0px;color:#000;letter-spacing:0.232px;">1:40376</div>
<svg style="position:absolute;left:765px;top:910px;" width="13" height="16" viewBox="0 0 13 16"><path d="M3 7V4.5C3 2 4.5 0.8 6.5 0.8S10 2 10 4.5V7" fill="none" stroke="#6a6a6a" stroke-width="1.7"/><rect x="0.8" y="7" width="11.4" height="8.5" rx="1.2" fill="#6a6a6a"/></svg>
<div class="t" style="left:786.5px;top:911.13px;font-size:14.0px;color:#000;letter-spacing:0.345px;">Lente d'ingrandimento</div>
<div style="position:absolute;left:935px;top:906px;width:83.5px;height:25px;background:#fff;border:1px solid #acacb0;border-radius:3px;box-sizing:border-box"></div>
<div style="position:absolute;left:1004px;top:906.5px;width:1px;height:24px;background:#d8d8dc"></div>
<svg style="position:absolute;left:1007px;top:910px;" width="8" height="16" viewBox="0 0 8 16"><path d="M0.5 5L4 1L7.5 5Z" fill="#6a6a6a"/><path d="M0.5 11L4 15L7.5 11Z" fill="#6a6a6a"/></svg>
<div class="t" style="left:940.4px;top:911.13px;font-size:14.0px;color:#000;letter-spacing:-0.602px;">100%</div>
<div class="t" style="left:1029.0px;top:911.13px;font-size:14.0px;color:#000;letter-spacing:-0.130px;">Rotazione</div>
<div style="position:absolute;left:1101.5px;top:906px;width:83px;height:25px;background:#fff;border:1px solid #acacb0;border-radius:3px;box-sizing:border-box"></div>
<div style="position:absolute;left:1170px;top:906.5px;width:1px;height:24px;background:#d8d8dc"></div>
<svg style="position:absolute;left:1173px;top:910px;" width="8" height="16" viewBox="0 0 8 16"><path d="M0.5 5L4 1L7.5 5Z" fill="#6a6a6a"/><path d="M0.5 11L4 15L7.5 11Z" fill="#6a6a6a"/></svg>
<div class="t" style="left:1106.0px;top:911.13px;font-size:14.0px;color:#000;letter-spacing:0.013px;">0,0 °</div>
<div style="position:absolute;left:1191px;top:911.5px;width:13.5px;height:13.5px;background:#fff;border:1px solid #8a8a8e;box-sizing:border-box"></div>
<svg style="position:absolute;left:1193px;top:913px;" width="10" height="10" viewBox="0 0 10 10"><path d="M1.2 5L3.8 8.3L8.8 1" fill="none" stroke="#111" stroke-width="1.6"/></svg>
<div class="t" style="left:1210.5px;top:911.13px;font-size:14.0px;color:#000;letter-spacing:0.025px;">Visualizza</div>
<svg style="position:absolute;left:1289px;top:910px;" width="17" height="16" viewBox="0 0 17 16"><path d="M8 1.5L15.5 8C14.5 12.5 11.5 14.5 8 14.5S1.5 12.5 0.5 8Z" fill="#e4e4e6" stroke="#777" stroke-width="1"/><path d="M1 8H15M3 11.5H13M4.5 4.5H11.5M8 1.5V14.5M8 1.5L4.5 8L6 14M8 1.5L11.5 8L10 14" fill="none" stroke="#808080" stroke-width="0.8"/></svg>
<div class="t" style="left:1307.8px;top:911.13px;font-size:14.0px;color:#000;letter-spacing:-0.792px;">EPSG:4326</div>
<svg style="position:absolute;left:1401px;top:911px;" width="17" height="15" viewBox="0 0 17 15"><path d="M8 0.5C12.5 0.5 16 3 16 6.5S12.5 12.5 8 12.5C7 12.5 6.5 12.4 6 12.3L9 14.5C5 14.5 3 13 2.5 11.5C1 10.5 0.2 8.5 0.2 6.5C0.2 3 3.5 0.5 8 0.5Z" fill="#5c5c5c"/><circle cx="4.6" cy="6.5" r="1.2" fill="#fff"/><circle cx="8" cy="6.5" r="1.2" fill="#fff"/><circle cx="11.4" cy="6.5" r="1.2" fill="#fff"/></svg>
<div style="position:absolute;left:1443px;top:921px;width:1px;height:1px;background:#b0b0b4"></div>
<div style="position:absolute;left:1440px;top:924px;width:1px;height:1px;background:#b0b0b4"></div>
<div style="position:absolute;left:1443px;top:924px;width:1px;height:1px;background:#b0b0b4"></div>
<div style="position:absolute;left:1437px;top:927px;width:1px;height:1px;background:#b0b0b4"></div>
<div style="position:absolute;left:1440px;top:927px;width:1px;height:1px;background:#b0b0b4"></div>
<div style="position:absolute;left:1443px;top:927px;width:1px;height:1px;background:#b0b0b4"></div>
<div style="position:absolute;left:1434px;top:930px;width:1px;height:1px;background:#b0b0b4"></div>
<div style="position:absolute;left:1437px;top:930px;width:1px;height:1px;background:#b0b0b4"></div>
<div style="position:absolute;left:1440px;top:930px;width:1px;height:1px;background:#b0b0b4"></div>
<div style="position:absolute;left:1443px;top:930px;width:1px;height:1px;background:#b0b0b4"></div>
<svg style="position:absolute;left:362.5px;top:137px;" width="13" height="20" viewBox="0 0 13 20"><path d="M1.5 1.5V12.3L3.9 10.1L6.6 17.6L8.8 16.8L6 9.6L9.6 9.4Z" fill="#000" stroke="#fff" stroke-width="2" paint-order="stroke" stroke-linejoin="miter"/></svg>
<div style="position:absolute;left:466px;top:935px;width:620px;height:1px;background:repeating-linear-gradient(90deg,#6a6a70 0px,#6a6a70 1px,#dcdce0 1px,#dcdce0 3px)"></div>
</body></html>
